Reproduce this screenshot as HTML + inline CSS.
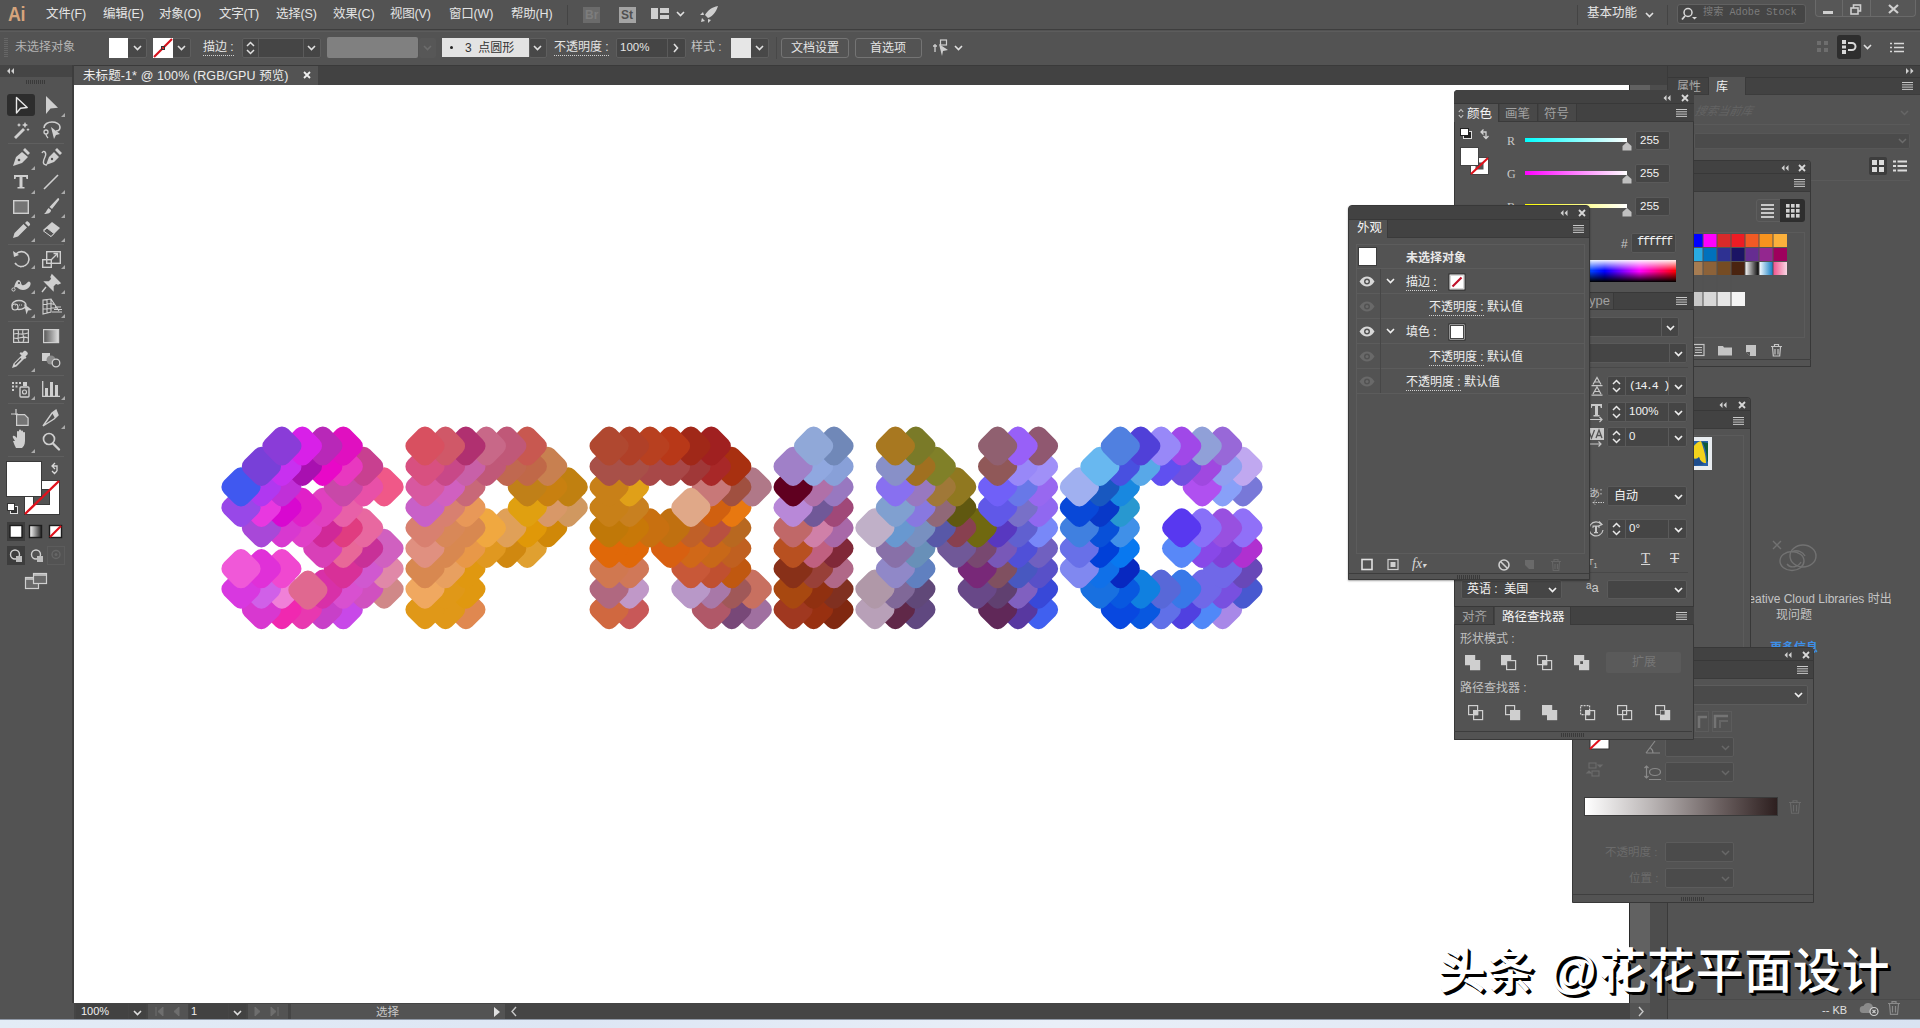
<!DOCTYPE html>
<html lang="zh-CN">
<head>
<meta charset="utf-8">
<title>未标题-1* @ 100% (RGB/GPU 预览)</title>
<style>
*{box-sizing:border-box;margin:0;padding:0}
html,body{width:1920px;height:1028px;overflow:hidden;background:#535353}
body{font-family:"Liberation Sans","Noto Sans CJK SC",sans-serif;font-size:12px;color:#e4e4e4;position:relative}
.abs{position:absolute}
.t{position:absolute;white-space:nowrap;line-height:1}
.dim{color:#8d8d8d}
.fld{position:absolute;background:#454545;border:1px solid #606060;border-radius:2px}
.dfld{position:absolute;background:#4b4b4b;border:1px solid #5c5c5c;border-radius:2px}
.chev{position:absolute;width:9px;height:6px}
.ul{border-bottom:1px dotted #d0d0d0;padding-bottom:1px}
svg{position:absolute;overflow:visible}
.panel{position:absolute;background:#535353;border:1px solid #383838;box-shadow:0 0 0 0 #000}
.phead{position:absolute;left:0;right:0;top:0;background:#424242}
.ptabs{position:absolute;left:0;right:0;background:#424242}
.ptab{position:absolute;top:0;bottom:0;background:#535353;border-right:1px solid #383838}
.ico{stroke:#d6d6d6;fill:none;stroke-width:1.4}
</style>
</head>
<body>

<!-- ===== menu bar ===== -->
<div class="abs" style="left:0;top:0;width:1920px;height:30px;background:#535353;border-bottom:1px solid #3e3e3e"></div>
<div class="t" style="left:8px;top:3px;font-size:21px;font-weight:bold;color:#d6a47c;letter-spacing:-0.5px;transform:scaleX(.85);transform-origin:left">Ai</div>
<div class="t" style="left:46px;top:8px;font-size:12.500px;letter-spacing:-0.200px">文件(F)</div>
<div class="t" style="left:103px;top:8px;font-size:12.500px;letter-spacing:-0.200px">编辑(E)</div>
<div class="t" style="left:159px;top:8px;font-size:12.500px;letter-spacing:-0.200px">对象(O)</div>
<div class="t" style="left:219px;top:8px;font-size:12.500px;letter-spacing:-0.200px">文字(T)</div>
<div class="t" style="left:276px;top:8px;font-size:12.500px;letter-spacing:-0.200px">选择(S)</div>
<div class="t" style="left:333px;top:8px;font-size:12.500px;letter-spacing:-0.200px">效果(C)</div>
<div class="t" style="left:390px;top:8px;font-size:12.500px;letter-spacing:-0.200px">视图(V)</div>
<div class="t" style="left:449px;top:8px;font-size:12.500px;letter-spacing:-0.200px">窗口(W)</div>
<div class="t" style="left:511px;top:8px;font-size:12.500px;letter-spacing:-0.200px">帮助(H)</div>
<div class="abs" style="left:567px;top:5px;width:1px;height:20px;background:#444"></div>
<div class="abs" style="left:583px;top:7px;width:17px;height:16px;background:#6b6b6b"></div>
<div class="t" style="left:585px;top:9px;font-size:12px;font-weight:bold;color:#7d7d7d">Br</div>
<div class="abs" style="left:619px;top:7px;width:17px;height:16px;background:#a4a4a4"></div>
<div class="t" style="left:621px;top:9px;font-size:12px;font-weight:bold;color:#505050">St</div>
<svg style="left:651px;top:8px" width="18" height="12"><rect x="0" y="0" width="7" height="11" fill="#cfcfcf"/><rect x="9" y="0" width="9" height="5" fill="#cfcfcf"/><rect x="9" y="7" width="9" height="4" fill="#cfcfcf"/></svg>
<svg style="left:676px;top:11px" width="9" height="6"><path d="M1 1l3.5 3.5L8 1" stroke="#e0e0e0" stroke-width="1.6" fill="none"/></svg>
<svg style="left:700px;top:6px" width="19" height="17" viewBox="0 0 19 17"><path d="M18 0C12 1 8 4 5 9l3 3c5-2 8-6 10-12zM4 9L0 9 3 6zM8 13l0 4 3-3zM2 12l3 3-4 1z" fill="#cfcfcf"/></svg>
<div class="abs" style="left:1577px;top:5px;width:1px;height:20px;background:#444"></div>
<div class="t" style="left:1587px;top:7px;font-size:12.5px">基本功能</div>
<svg style="left:1645px;top:12px" width="9" height="6"><path d="M1 1l3.5 3.5L8 1" stroke="#e0e0e0" stroke-width="1.6" fill="none"/></svg>
<div class="abs" style="left:1667px;top:5px;width:1px;height:20px;background:#444"></div>
<div class="abs" style="left:1677px;top:4px;width:129px;height:20px;background:#454545;border:1px solid #616161;border-radius:3px"></div>
<svg style="left:1681px;top:7px" width="16" height="14" viewBox="0 0 16 14"><circle cx="7" cy="5.5" r="4" stroke="#d8d8d8" stroke-width="1.5" fill="none"/><path d="M4 9L1 12.5" stroke="#d8d8d8" stroke-width="1.8"/><path d="M11 10h5l-2.5 2.5z" fill="#d8d8d8"/></svg>
<div class="t" style="left:1703px;top:8px;font-size:10.200px;color:#7c7c7c;font-family:'Liberation Mono','Noto Sans CJK SC',monospace">搜索 Adobe Stock</div>
<div class="abs" style="left:1815px;top:0;width:101px;height:17px;border:1px solid #6a6a6a;border-top:none;border-radius:0 0 4px 4px;background:#575757"></div>
<div class="abs" style="left:1842px;top:0;width:1px;height:16px;background:#6a6a6a"></div>
<div class="abs" style="left:1870px;top:0;width:1px;height:16px;background:#6a6a6a"></div>
<div class="abs" style="left:1823px;top:11px;width:10px;height:3px;background:#cfcfcf"></div>
<svg style="left:1850px;top:4px" width="12" height="11"><rect x="3.5" y="1" width="7" height="6" stroke="#cfcfcf" stroke-width="1.6" fill="none"/><rect x="1" y="4" width="7" height="6" stroke="#cfcfcf" stroke-width="1.6" fill="#575757"/></svg>
<svg style="left:1888px;top:4px" width="11" height="10"><path d="M1 1l9 8M10 1l-9 8" stroke="#cfcfcf" stroke-width="2.2"/></svg>

<!-- ===== control bar ===== -->
<div class="abs" style="left:0;top:31px;width:1920px;height:34px;background:#535353;border-top:1px solid #5c5c5c"></div>
<div class="abs" style="left:4px;top:38px;width:4px;height:20px;background:repeating-linear-gradient(#666 0 1px,transparent 1px 2px)"></div>
<div class="t" style="left:15px;top:41px;font-size:12px;color:#b4b4b4">未选择对象</div>
<div class="abs" style="left:109px;top:38px;width:38px;height:20px;background:#484848;border:1px solid #5e5e5e;border-radius:2px"></div>
<div class="abs" style="left:109px;top:38px;width:19px;height:20px;background:#fff"></div>
<svg style="left:133px;top:45px" width="9" height="6"><path d="M1 1l3.5 3.5L8 1" stroke="#e0e0e0" stroke-width="1.6" fill="none"/></svg>
<div class="abs" style="left:153px;top:38px;width:38px;height:20px;background:#484848;border:1px solid #5e5e5e;border-radius:2px"></div>
<svg style="left:153px;top:38px" width="20" height="20"><rect width="20" height="20" fill="#fff"/><path d="M1 19L19 1" stroke="#d6111b" stroke-width="2.2"/><rect x="8.5" y="8.5" width="3" height="3" fill="none" stroke="#333" stroke-width="1"/></svg>
<svg style="left:177px;top:45px" width="9" height="6"><path d="M1 1l3.5 3.5L8 1" stroke="#e0e0e0" stroke-width="1.6" fill="none"/></svg>
<div class="t" style="left:203px;top:41px;font-size:12px"><span class="ul">描边 :</span></div>
<div class="abs" style="left:242px;top:38px;width:79px;height:20px;background:#454545;border:1px solid #5e5e5e;border-radius:2px"></div>
<div class="abs" style="left:258px;top:39px;width:1px;height:18px;background:#5a5a5a"></div>
<div class="abs" style="left:303px;top:39px;width:1px;height:18px;background:#5a5a5a"></div>
<svg style="left:246px;top:41px" width="9" height="14"><path d="M1 5l3.5-3.5L8 5M1 9l3.5 3.5L8 9" stroke="#e0e0e0" stroke-width="1.5" fill="none"/></svg>
<svg style="left:307px;top:45px" width="9" height="6"><path d="M1 1l3.5 3.5L8 1" stroke="#e0e0e0" stroke-width="1.6" fill="none"/></svg>
<div class="abs" style="left:327px;top:37px;width:91px;height:21px;background:#808080;border-radius:2px"></div>
<div class="abs" style="left:419px;top:38px;width:17px;height:20px;background:#575757;border-radius:2px"></div>
<svg style="left:423px;top:45px" width="9" height="6"><path d="M1 1l3.5 3.5L8 1" stroke="#6c6c6c" stroke-width="1.6" fill="none"/></svg>
<div class="abs" style="left:442px;top:38px;width:87px;height:19px;background:#e3e3e3"></div>
<div class="abs" style="left:450px;top:46px;width:3px;height:3px;border-radius:50%;background:#222"></div>
<div class="t" style="left:465px;top:42px;font-size:12px;color:#333">3&nbsp; 点圆形</div>
<div class="abs" style="left:529px;top:38px;width:18px;height:20px;background:#484848;border:1px solid #5e5e5e;border-radius:2px"></div>
<svg style="left:533px;top:45px" width="9" height="6"><path d="M1 1l3.5 3.5L8 1" stroke="#e0e0e0" stroke-width="1.6" fill="none"/></svg>
<div class="t" style="left:554px;top:41px;font-size:12px"><span class="ul">不透明度 :</span></div>
<div class="abs" style="left:616px;top:38px;width:70px;height:20px;background:#454545;border:1px solid #5e5e5e;border-radius:2px"></div>
<div class="abs" style="left:667px;top:39px;width:1px;height:18px;background:#5a5a5a"></div>
<div class="t" style="left:620px;top:42px;font-size:11.5px">100%</div>
<svg style="left:673px;top:43px" width="6" height="10"><path d="M1 1l3.5 4L1 9" stroke="#e0e0e0" stroke-width="1.6" fill="none"/></svg>
<div class="t" style="left:691px;top:41px;font-size:12px;color:#c4c4c4">样式 :</div>
<div class="abs" style="left:731px;top:38px;width:38px;height:20px;background:#484848;border:1px solid #5e5e5e;border-radius:2px"></div>
<div class="abs" style="left:731px;top:38px;width:20px;height:20px;background:#e6e6e6"></div>
<svg style="left:755px;top:45px" width="9" height="6"><path d="M1 1l3.5 3.5L8 1" stroke="#e0e0e0" stroke-width="1.6" fill="none"/></svg>
<div class="abs" style="left:776px;top:37px;width:1px;height:22px;background:#484848"></div>
<div class="abs" style="left:781px;top:38px;width:68px;height:20px;border:1px solid #747474;border-radius:3px"></div>
<div class="t" style="left:791px;top:42px;font-size:12px">文档设置</div>
<div class="abs" style="left:855px;top:38px;width:67px;height:20px;border:1px solid #747474;border-radius:3px"></div>
<div class="t" style="left:870px;top:42px;font-size:12px">首选项</div>
<svg style="left:931px;top:38px" width="20" height="20" viewBox="0 0 20 20"><path d="M2 8h4M4 6v8" stroke="#cfcfcf" stroke-width="1.3"/><path d="M8 6l9 6-5 1-1 5z" fill="#cfcfcf"/><rect x="9.5" y="2" width="6" height="5" fill="none" stroke="#cfcfcf" stroke-width="1.2"/></svg>
<svg style="left:954px;top:45px" width="9" height="6"><path d="M1 1l3.5 3.5L8 1" stroke="#e0e0e0" stroke-width="1.6" fill="none"/></svg>
<!-- right control icons -->
<svg style="left:1817px;top:41px" width="12" height="12"><rect x="0" y="0" width="4" height="4" fill="#6e6e6e"/><rect x="7" y="0" width="4" height="4" fill="#6e6e6e"/><rect x="0" y="7" width="4" height="4" fill="#6e6e6e"/><rect x="7" y="7" width="4" height="4" fill="#6e6e6e"/></svg>
<div class="abs" style="left:1837px;top:35px;width:24px;height:24px;background:#2e2e2e;border-radius:3px"></div>
<svg style="left:1842px;top:40px" width="15" height="14"><rect x="0" y="0" width="4" height="4" fill="#d8d8d8"/><rect x="0" y="5.5" width="4" height="3" fill="#d8d8d8"/><rect x="0" y="10" width="4" height="4" fill="#d8d8d8"/><path d="M6 3h4a3.5 3.5 0 010 7H6" stroke="#d8d8d8" stroke-width="2" fill="none"/></svg>
<svg style="left:1863px;top:44px" width="9" height="6"><path d="M1 1l3.5 3.5L8 1" stroke="#e0e0e0" stroke-width="1.6" fill="none"/></svg>
<svg style="left:1890px;top:42px" width="14" height="11"><path d="M0 1.5h2M4 1.5h10M0 5.5h2M4 5.5h10M0 9.5h2M4 9.5h10" stroke="#d8d8d8" stroke-width="1.6"/></svg>

<!-- ===== tab row ===== -->
<div class="abs" style="left:0;top:65px;width:1920px;height:20px;background:#424242;border-top:1px solid #3a3a3a"></div>
<div class="abs" style="left:0;top:65px;width:73px;height:12px;background:#454545"></div>
<svg style="left:6px;top:68px" width="9" height="6"><path d="M4 0L1 3l3 3M8 0L5 3l3 3" fill="#cfcfcf" stroke="none"/></svg>
<div class="abs" style="left:74px;top:66px;width:244px;height:19px;background:#535353"></div>
<div class="t" style="left:83px;top:70px;font-size:12.500px;letter-spacing:0.100px;color:#ececec">未标题-1* @ 100% (RGB/GPU 预览)</div>
<svg style="left:303px;top:71px" width="8" height="8"><path d="M1 1l6 6M7 1l-6 6" stroke="#f0f0f0" stroke-width="1.8"/></svg>

<!-- ===== toolbar bg ===== -->
<div class="abs" style="left:0;top:77px;width:72px;height:926px;background:#535353"></div>
<div class="abs" style="left:72px;top:65px;width:2px;height:938px;background:#3d3d3d"></div>
<div class="abs" style="left:26px;top:80px;width:20px;height:4px;background:repeating-linear-gradient(90deg,#3a3a3a 0 1px,transparent 1px 2px)"></div>

<!-- ===== canvas ===== -->
<div class="abs" style="left:74px;top:85px;width:1555px;height:918px;background:#fff"></div>
<div class="abs" style="left:1629px;top:85px;width:21px;height:918px;background:#616161;border-left:1px solid #2a2a2a"></div>
<div class="abs" style="left:1650px;top:85px;width:17px;height:934px;background:#4d4d4d"></div>
<div class="abs" style="left:1667px;top:65px;width:1px;height:954px;background:#3a3a3a"></div>

<!-- ===== status bar ===== -->
<div class="abs" style="left:0;top:1003px;width:1650px;height:16px;background:#454545"></div>
<div class="abs" style="left:0;top:1003px;width:74px;height:16px;background:#535353"></div>
<div class="abs" style="left:76px;top:1004px;width:52px;height:15px;background:#424242"></div>
<div class="t" style="left:81px;top:1006px;font-size:11px;color:#f0f0f0">100%</div>
<div class="abs" style="left:129px;top:1004px;width:17px;height:15px;background:#424242"></div>
<svg style="left:133px;top:1010px" width="9" height="6"><path d="M1 1l3.5 3.5L8 1" stroke="#e0e0e0" stroke-width="1.6" fill="none"/></svg>
<div class="abs" style="left:148px;top:1004px;width:40px;height:15px;background:#535353"></div>
<svg style="left:155px;top:1007px" width="28" height="9"><path d="M1 0v9M8 0L3 4.5 8 9zM24 0l-5 4.5 5 4.5z" fill="#6e6e6e" stroke="#6e6e6e" stroke-width="1"/></svg>
<div class="abs" style="left:189px;top:1004px;width:39px;height:15px;background:#424242"></div>
<div class="t" style="left:191px;top:1006px;font-size:11px;color:#f0f0f0">1</div>
<div class="abs" style="left:229px;top:1004px;width:17px;height:15px;background:#424242"></div>
<svg style="left:233px;top:1010px" width="9" height="6"><path d="M1 1l3.5 3.5L8 1" stroke="#e0e0e0" stroke-width="1.6" fill="none"/></svg>
<div class="abs" style="left:248px;top:1004px;width:40px;height:15px;background:#535353"></div>
<svg style="left:254px;top:1007px" width="28" height="9"><path d="M1 0l5 4.5L1 9zM17 0l5 4.5L17 9zM24 0v9" fill="#6e6e6e" stroke="#6e6e6e" stroke-width="1"/></svg>
<div class="abs" style="left:291px;top:1004px;width:214px;height:15px;background:#535353"></div>
<div class="t" style="left:376px;top:1007px;font-size:11.5px;color:#c8c8c8">选择</div>
<svg style="left:494px;top:1007px" width="7" height="10"><path d="M0 0l6 5-6 5z" fill="#e0e0e0"/></svg>
<svg style="left:511px;top:1007px" width="6" height="9"><path d="M5 0L1 4.5 5 9" stroke="#c8c8c8" stroke-width="1.4" fill="none"/></svg>
<svg style="left:1638px;top:1007px" width="6" height="9"><path d="M1 0l4 4.5L1 9" stroke="#c8c8c8" stroke-width="1.4" fill="none"/></svg>
<div class="abs" style="left:1630px;top:1003px;width:20px;height:16px;background:#535353;z-index:-0"></div>
<svg style="left:1638px;top:1007px" width="6" height="9"><path d="M1 0l4 4.5L1 9" stroke="#c8c8c8" stroke-width="1.4" fill="none"/></svg>
<!-- bottom OS strip -->
<div class="abs" style="left:0;top:1019px;width:1920px;height:9px;background:linear-gradient(90deg,#e3ecf6 0%,#dde6f4 30%,#e9eff8 55%,#d9e3f2 100%);border-top:1px solid #8f98a6"></div>

<!-- ===== artwork ===== -->
<svg class="art" style="position:absolute;left:74px;top:85px" width="1556" height="918" viewBox="74 85 1556 918">
<rect x="1206.1" y="593.1" width="33" height="33" rx="9" fill="#a888e8" transform="rotate(45 1222.6 609.6)"/>
<rect x="1185.7" y="593.1" width="33" height="33" rx="9" fill="#5088f8" transform="rotate(45 1202.2 609.6)"/>
<rect x="1165.2" y="593.1" width="33" height="33" rx="9" fill="#5040e0" transform="rotate(45 1181.7 609.6)"/>
<rect x="1144.8" y="593.1" width="33" height="33" rx="9" fill="#6070e8" transform="rotate(45 1161.2 609.6)"/>
<rect x="1124.3" y="593.1" width="33" height="33" rx="9" fill="#0858e0" transform="rotate(45 1140.8 609.6)"/>
<rect x="1103.8" y="593.1" width="33" height="33" rx="9" fill="#0848e0" transform="rotate(45 1120.3 609.6)"/>
<rect x="1022.0" y="593.1" width="33" height="33" rx="9" fill="#4060f0" transform="rotate(45 1038.5 609.6)"/>
<rect x="1001.6" y="593.1" width="33" height="33" rx="9" fill="#5838a0" transform="rotate(45 1018.1 609.6)"/>
<rect x="981.1" y="593.1" width="33" height="33" rx="9" fill="#602858" transform="rotate(45 997.6 609.6)"/>
<rect x="899.4" y="593.1" width="33" height="33" rx="9" fill="#604880" transform="rotate(45 915.9 609.6)"/>
<rect x="878.9" y="593.1" width="33" height="33" rx="9" fill="#602848" transform="rotate(45 895.4 609.6)"/>
<rect x="858.4" y="593.1" width="33" height="33" rx="9" fill="#b8a0b8" transform="rotate(45 874.9 609.6)"/>
<rect x="817.5" y="593.1" width="33" height="33" rx="9" fill="#802810" transform="rotate(45 834.0 609.6)"/>
<rect x="797.1" y="593.1" width="33" height="33" rx="9" fill="#983010" transform="rotate(45 813.6 609.6)"/>
<rect x="776.6" y="593.1" width="33" height="33" rx="9" fill="#a03820" transform="rotate(45 793.1 609.6)"/>
<rect x="735.8" y="593.1" width="33" height="33" rx="9" fill="#a070a0" transform="rotate(45 752.2 609.6)"/>
<rect x="715.3" y="593.1" width="33" height="33" rx="9" fill="#784878" transform="rotate(45 731.8 609.6)"/>
<rect x="694.8" y="593.1" width="33" height="33" rx="9" fill="#b05868" transform="rotate(45 711.3 609.6)"/>
<rect x="613.0" y="593.1" width="33" height="33" rx="9" fill="#c85858" transform="rotate(45 629.5 609.6)"/>
<rect x="592.6" y="593.1" width="33" height="33" rx="9" fill="#d06840" transform="rotate(45 609.1 609.6)"/>
<rect x="449.4" y="593.1" width="33" height="33" rx="9" fill="#e08850" transform="rotate(45 465.9 609.6)"/>
<rect x="429.0" y="593.1" width="33" height="33" rx="9" fill="#e09818" transform="rotate(45 445.5 609.6)"/>
<rect x="408.5" y="593.1" width="33" height="33" rx="9" fill="#e09818" transform="rotate(45 425.0 609.6)"/>
<rect x="326.8" y="593.1" width="33" height="33" rx="9" fill="#c848e8" transform="rotate(45 343.2 609.6)"/>
<rect x="306.3" y="593.1" width="33" height="33" rx="9" fill="#c840c8" transform="rotate(45 322.8 609.6)"/>
<rect x="285.9" y="593.1" width="33" height="33" rx="9" fill="#e838b0" transform="rotate(45 302.4 609.6)"/>
<rect x="265.4" y="593.1" width="33" height="33" rx="9" fill="#f028b0" transform="rotate(45 281.9 609.6)"/>
<rect x="244.9" y="593.1" width="33" height="33" rx="9" fill="#d838d0" transform="rotate(45 261.4 609.6)"/>
<rect x="1226.5" y="572.6" width="33" height="33" rx="9" fill="#4858d0" transform="rotate(45 1243.0 589.1)"/>
<rect x="1206.1" y="572.6" width="33" height="33" rx="9" fill="#7850e0" transform="rotate(45 1222.6 589.1)"/>
<rect x="1185.7" y="572.6" width="33" height="33" rx="9" fill="#7068e8" transform="rotate(45 1202.2 589.1)"/>
<rect x="1165.2" y="572.6" width="33" height="33" rx="9" fill="#3878e8" transform="rotate(45 1181.7 589.1)"/>
<rect x="1144.8" y="572.6" width="33" height="33" rx="9" fill="#5868d8" transform="rotate(45 1161.2 589.1)"/>
<rect x="1124.3" y="572.6" width="33" height="33" rx="9" fill="#1080e0" transform="rotate(45 1140.8 589.1)"/>
<rect x="1103.8" y="572.6" width="33" height="33" rx="9" fill="#0858e0" transform="rotate(45 1120.3 589.1)"/>
<rect x="1083.4" y="572.6" width="33" height="33" rx="9" fill="#1870e0" transform="rotate(45 1099.9 589.1)"/>
<rect x="1022.0" y="572.6" width="33" height="33" rx="9" fill="#3848d8" transform="rotate(45 1038.5 589.1)"/>
<rect x="1001.6" y="572.6" width="33" height="33" rx="9" fill="#8060c0" transform="rotate(45 1018.1 589.1)"/>
<rect x="981.1" y="572.6" width="33" height="33" rx="9" fill="#604070" transform="rotate(45 997.6 589.1)"/>
<rect x="960.7" y="572.6" width="33" height="33" rx="9" fill="#684888" transform="rotate(45 977.2 589.1)"/>
<rect x="899.4" y="572.6" width="33" height="33" rx="9" fill="#604878" transform="rotate(45 915.9 589.1)"/>
<rect x="878.9" y="572.6" width="33" height="33" rx="9" fill="#806898" transform="rotate(45 895.4 589.1)"/>
<rect x="858.4" y="572.6" width="33" height="33" rx="9" fill="#b098a8" transform="rotate(45 874.9 589.1)"/>
<rect x="817.5" y="572.6" width="33" height="33" rx="9" fill="#803020" transform="rotate(45 834.0 589.1)"/>
<rect x="797.1" y="572.6" width="33" height="33" rx="9" fill="#903010" transform="rotate(45 813.6 589.1)"/>
<rect x="776.6" y="572.6" width="33" height="33" rx="9" fill="#a84810" transform="rotate(45 793.1 589.1)"/>
<rect x="735.8" y="572.6" width="33" height="33" rx="9" fill="#c87060" transform="rotate(45 752.2 589.1)"/>
<rect x="715.3" y="572.6" width="33" height="33" rx="9" fill="#a05858" transform="rotate(45 731.8 589.1)"/>
<rect x="694.8" y="572.6" width="33" height="33" rx="9" fill="#a878a8" transform="rotate(45 711.3 589.1)"/>
<rect x="674.4" y="572.6" width="33" height="33" rx="9" fill="#b898c8" transform="rotate(45 690.9 589.1)"/>
<rect x="613.0" y="572.6" width="33" height="33" rx="9" fill="#c098c8" transform="rotate(45 629.5 589.1)"/>
<rect x="592.6" y="572.6" width="33" height="33" rx="9" fill="#b06880" transform="rotate(45 609.1 589.1)"/>
<rect x="449.4" y="572.6" width="33" height="33" rx="9" fill="#e09810" transform="rotate(45 465.9 589.1)"/>
<rect x="429.0" y="572.6" width="33" height="33" rx="9" fill="#e09818" transform="rotate(45 445.5 589.1)"/>
<rect x="408.5" y="572.6" width="33" height="33" rx="9" fill="#f0a860" transform="rotate(45 425.0 589.1)"/>
<rect x="367.6" y="572.6" width="33" height="33" rx="9" fill="#d08888" transform="rotate(45 384.1 589.1)"/>
<rect x="347.2" y="572.6" width="33" height="33" rx="9" fill="#d050c0" transform="rotate(45 363.7 589.1)"/>
<rect x="326.8" y="572.6" width="33" height="33" rx="9" fill="#d850d0" transform="rotate(45 343.2 589.1)"/>
<rect x="306.3" y="572.6" width="33" height="33" rx="9" fill="#d830a8" transform="rotate(45 322.8 589.1)"/>
<rect x="265.4" y="572.6" width="33" height="33" rx="9" fill="#f080d8" transform="rotate(45 281.9 589.1)"/>
<rect x="244.9" y="572.6" width="33" height="33" rx="9" fill="#d060e8" transform="rotate(45 261.4 589.1)"/>
<rect x="224.5" y="572.6" width="33" height="33" rx="9" fill="#d838e0" transform="rotate(45 241.0 589.1)"/>
<rect x="1226.5" y="552.2" width="33" height="33" rx="9" fill="#6848b8" transform="rotate(45 1243.0 568.7)"/>
<rect x="1206.1" y="552.2" width="33" height="33" rx="9" fill="#7068e8" transform="rotate(45 1222.6 568.7)"/>
<rect x="1103.8" y="552.2" width="33" height="33" rx="9" fill="#0828c0" transform="rotate(45 1120.3 568.7)"/>
<rect x="1083.4" y="552.2" width="33" height="33" rx="9" fill="#1070e8" transform="rotate(45 1099.9 568.7)"/>
<rect x="1062.9" y="552.2" width="33" height="33" rx="9" fill="#8088f0" transform="rotate(45 1079.4 568.7)"/>
<rect x="1022.0" y="552.2" width="33" height="33" rx="9" fill="#5850c8" transform="rotate(45 1038.5 568.7)"/>
<rect x="1001.6" y="552.2" width="33" height="33" rx="9" fill="#4858c0" transform="rotate(45 1018.1 568.7)"/>
<rect x="981.1" y="552.2" width="33" height="33" rx="9" fill="#805060" transform="rotate(45 997.6 568.7)"/>
<rect x="960.7" y="552.2" width="33" height="33" rx="9" fill="#782878" transform="rotate(45 977.2 568.7)"/>
<rect x="899.4" y="552.2" width="33" height="33" rx="9" fill="#6080c0" transform="rotate(45 915.9 568.7)"/>
<rect x="878.9" y="552.2" width="33" height="33" rx="9" fill="#9088c8" transform="rotate(45 895.4 568.7)"/>
<rect x="817.5" y="552.2" width="33" height="33" rx="9" fill="#b06888" transform="rotate(45 834.0 568.7)"/>
<rect x="797.1" y="552.2" width="33" height="33" rx="9" fill="#984038" transform="rotate(45 813.6 568.7)"/>
<rect x="776.6" y="552.2" width="33" height="33" rx="9" fill="#883018" transform="rotate(45 793.1 568.7)"/>
<rect x="715.3" y="552.2" width="33" height="33" rx="9" fill="#c05810" transform="rotate(45 731.8 568.7)"/>
<rect x="694.8" y="552.2" width="33" height="33" rx="9" fill="#c05030" transform="rotate(45 711.3 568.7)"/>
<rect x="674.4" y="552.2" width="33" height="33" rx="9" fill="#c85838" transform="rotate(45 690.9 568.7)"/>
<rect x="613.0" y="552.2" width="33" height="33" rx="9" fill="#d07858" transform="rotate(45 629.5 568.7)"/>
<rect x="592.6" y="552.2" width="33" height="33" rx="9" fill="#d07850" transform="rotate(45 609.1 568.7)"/>
<rect x="449.4" y="552.2" width="33" height="33" rx="9" fill="#e09810" transform="rotate(45 465.9 568.7)"/>
<rect x="429.0" y="552.2" width="33" height="33" rx="9" fill="#e8a060" transform="rotate(45 445.5 568.7)"/>
<rect x="408.5" y="552.2" width="33" height="33" rx="9" fill="#d88850" transform="rotate(45 425.0 568.7)"/>
<rect x="367.6" y="552.2" width="33" height="33" rx="9" fill="#e088a8" transform="rotate(45 384.1 568.7)"/>
<rect x="347.2" y="552.2" width="33" height="33" rx="9" fill="#d058d0" transform="rotate(45 363.7 568.7)"/>
<rect x="326.8" y="552.2" width="33" height="33" rx="9" fill="#d83098" transform="rotate(45 343.2 568.7)"/>
<rect x="265.4" y="552.2" width="33" height="33" rx="9" fill="#f048d0" transform="rotate(45 281.9 568.7)"/>
<rect x="244.9" y="552.2" width="33" height="33" rx="9" fill="#e030d8" transform="rotate(45 261.4 568.7)"/>
<rect x="224.5" y="552.2" width="33" height="33" rx="9" fill="#f058d8" transform="rotate(45 241.0 568.7)"/>
<rect x="1226.5" y="531.8" width="33" height="33" rx="9" fill="#b030d0" transform="rotate(45 1243.0 548.2)"/>
<rect x="1206.1" y="531.8" width="33" height="33" rx="9" fill="#8040d8" transform="rotate(45 1222.6 548.2)"/>
<rect x="1185.7" y="531.8" width="33" height="33" rx="9" fill="#8848e8" transform="rotate(45 1202.2 548.2)"/>
<rect x="1165.2" y="531.8" width="33" height="33" rx="9" fill="#5888f8" transform="rotate(45 1181.7 548.2)"/>
<rect x="1103.8" y="531.8" width="33" height="33" rx="9" fill="#0878f0" transform="rotate(45 1120.3 548.2)"/>
<rect x="1083.4" y="531.8" width="33" height="33" rx="9" fill="#0040d8" transform="rotate(45 1099.9 548.2)"/>
<rect x="1062.9" y="531.8" width="33" height="33" rx="9" fill="#6870e8" transform="rotate(45 1079.4 548.2)"/>
<rect x="1022.0" y="531.8" width="33" height="33" rx="9" fill="#7060c0" transform="rotate(45 1038.5 548.2)"/>
<rect x="1001.6" y="531.8" width="33" height="33" rx="9" fill="#5050d8" transform="rotate(45 1018.1 548.2)"/>
<rect x="981.1" y="531.8" width="33" height="33" rx="9" fill="#7858b8" transform="rotate(45 997.6 548.2)"/>
<rect x="960.7" y="531.8" width="33" height="33" rx="9" fill="#784870" transform="rotate(45 977.2 548.2)"/>
<rect x="940.2" y="531.8" width="33" height="33" rx="9" fill="#705898" transform="rotate(45 956.8 548.2)"/>
<rect x="899.4" y="531.8" width="33" height="33" rx="9" fill="#6890b8" transform="rotate(45 915.9 548.2)"/>
<rect x="878.9" y="531.8" width="33" height="33" rx="9" fill="#8870a8" transform="rotate(45 895.4 548.2)"/>
<rect x="817.5" y="531.8" width="33" height="33" rx="9" fill="#802838" transform="rotate(45 834.0 548.2)"/>
<rect x="797.1" y="531.8" width="33" height="33" rx="9" fill="#c06080" transform="rotate(45 813.6 548.2)"/>
<rect x="776.6" y="531.8" width="33" height="33" rx="9" fill="#b85020" transform="rotate(45 793.1 548.2)"/>
<rect x="715.3" y="531.8" width="33" height="33" rx="9" fill="#c06020" transform="rotate(45 731.8 548.2)"/>
<rect x="694.8" y="531.8" width="33" height="33" rx="9" fill="#c86818" transform="rotate(45 711.3 548.2)"/>
<rect x="674.4" y="531.8" width="33" height="33" rx="9" fill="#d06818" transform="rotate(45 690.9 548.2)"/>
<rect x="654.0" y="531.8" width="33" height="33" rx="9" fill="#d86010" transform="rotate(45 670.5 548.2)"/>
<rect x="613.0" y="531.8" width="33" height="33" rx="9" fill="#e06808" transform="rotate(45 629.5 548.2)"/>
<rect x="592.6" y="531.8" width="33" height="33" rx="9" fill="#e06808" transform="rotate(45 609.1 548.2)"/>
<rect x="510.8" y="531.8" width="33" height="33" rx="9" fill="#e0a030" transform="rotate(45 527.3 548.2)"/>
<rect x="490.3" y="531.8" width="33" height="33" rx="9" fill="#d08810" transform="rotate(45 506.8 548.2)"/>
<rect x="469.9" y="531.8" width="33" height="33" rx="9" fill="#e09820" transform="rotate(45 486.4 548.2)"/>
<rect x="449.4" y="531.8" width="33" height="33" rx="9" fill="#e89848" transform="rotate(45 465.9 548.2)"/>
<rect x="429.0" y="531.8" width="33" height="33" rx="9" fill="#d88850" transform="rotate(45 445.5 548.2)"/>
<rect x="408.5" y="531.8" width="33" height="33" rx="9" fill="#e09080" transform="rotate(45 425.0 548.2)"/>
<rect x="367.6" y="531.8" width="33" height="33" rx="9" fill="#d060c0" transform="rotate(45 384.1 548.2)"/>
<rect x="347.2" y="531.8" width="33" height="33" rx="9" fill="#c83098" transform="rotate(45 363.7 548.2)"/>
<rect x="326.8" y="531.8" width="33" height="33" rx="9" fill="#e86898" transform="rotate(45 343.2 548.2)"/>
<rect x="306.3" y="531.8" width="33" height="33" rx="9" fill="#d840b8" transform="rotate(45 322.8 548.2)"/>
<rect x="1226.5" y="511.3" width="33" height="33" rx="9" fill="#9070f8" transform="rotate(45 1243.0 527.8)"/>
<rect x="1206.1" y="511.3" width="33" height="33" rx="9" fill="#9850e0" transform="rotate(45 1222.6 527.8)"/>
<rect x="1185.7" y="511.3" width="33" height="33" rx="9" fill="#8870f8" transform="rotate(45 1202.2 527.8)"/>
<rect x="1165.2" y="511.3" width="33" height="33" rx="9" fill="#5838f0" transform="rotate(45 1181.7 527.8)"/>
<rect x="1103.8" y="511.3" width="33" height="33" rx="9" fill="#4090e8" transform="rotate(45 1120.3 527.8)"/>
<rect x="1083.4" y="511.3" width="33" height="33" rx="9" fill="#0850d8" transform="rotate(45 1099.9 527.8)"/>
<rect x="1062.9" y="511.3" width="33" height="33" rx="9" fill="#4080e0" transform="rotate(45 1079.4 527.8)"/>
<rect x="1022.0" y="511.3" width="33" height="33" rx="9" fill="#7888f8" transform="rotate(45 1038.5 527.8)"/>
<rect x="1001.6" y="511.3" width="33" height="33" rx="9" fill="#6060d0" transform="rotate(45 1018.1 527.8)"/>
<rect x="981.1" y="511.3" width="33" height="33" rx="9" fill="#5838c0" transform="rotate(45 997.6 527.8)"/>
<rect x="960.7" y="511.3" width="33" height="33" rx="9" fill="#706810" transform="rotate(45 977.2 527.8)"/>
<rect x="940.2" y="511.3" width="33" height="33" rx="9" fill="#884050" transform="rotate(45 956.8 527.8)"/>
<rect x="919.8" y="511.3" width="33" height="33" rx="9" fill="#5858a8" transform="rotate(45 936.3 527.8)"/>
<rect x="899.4" y="511.3" width="33" height="33" rx="9" fill="#7890c0" transform="rotate(45 915.9 527.8)"/>
<rect x="878.9" y="511.3" width="33" height="33" rx="9" fill="#6898d0" transform="rotate(45 895.4 527.8)"/>
<rect x="858.4" y="511.3" width="33" height="33" rx="9" fill="#c0b0c8" transform="rotate(45 874.9 527.8)"/>
<rect x="817.5" y="511.3" width="33" height="33" rx="9" fill="#a868a8" transform="rotate(45 834.0 527.8)"/>
<rect x="797.1" y="511.3" width="33" height="33" rx="9" fill="#d080a8" transform="rotate(45 813.6 527.8)"/>
<rect x="776.6" y="511.3" width="33" height="33" rx="9" fill="#c06868" transform="rotate(45 793.1 527.8)"/>
<rect x="715.3" y="511.3" width="33" height="33" rx="9" fill="#b86820" transform="rotate(45 731.8 527.8)"/>
<rect x="694.8" y="511.3" width="33" height="33" rx="9" fill="#b85040" transform="rotate(45 711.3 527.8)"/>
<rect x="674.4" y="511.3" width="33" height="33" rx="9" fill="#c06028" transform="rotate(45 690.9 527.8)"/>
<rect x="654.0" y="511.3" width="33" height="33" rx="9" fill="#c07010" transform="rotate(45 670.5 527.8)"/>
<rect x="633.5" y="511.3" width="33" height="33" rx="9" fill="#c87010" transform="rotate(45 650.0 527.8)"/>
<rect x="613.0" y="511.3" width="33" height="33" rx="9" fill="#c87808" transform="rotate(45 629.5 527.8)"/>
<rect x="592.6" y="511.3" width="33" height="33" rx="9" fill="#c07808" transform="rotate(45 609.1 527.8)"/>
<rect x="531.2" y="511.3" width="33" height="33" rx="9" fill="#d08808" transform="rotate(45 547.8 527.8)"/>
<rect x="510.8" y="511.3" width="33" height="33" rx="9" fill="#e09808" transform="rotate(45 527.3 527.8)"/>
<rect x="490.3" y="511.3" width="33" height="33" rx="9" fill="#e0a058" transform="rotate(45 506.8 527.8)"/>
<rect x="469.9" y="511.3" width="33" height="33" rx="9" fill="#f0a840" transform="rotate(45 486.4 527.8)"/>
<rect x="449.4" y="511.3" width="33" height="33" rx="9" fill="#d88850" transform="rotate(45 465.9 527.8)"/>
<rect x="429.0" y="511.3" width="33" height="33" rx="9" fill="#d88858" transform="rotate(45 445.5 527.8)"/>
<rect x="408.5" y="511.3" width="33" height="33" rx="9" fill="#d88070" transform="rotate(45 425.0 527.8)"/>
<rect x="347.2" y="511.3" width="33" height="33" rx="9" fill="#e868a0" transform="rotate(45 363.7 527.8)"/>
<rect x="326.8" y="511.3" width="33" height="33" rx="9" fill="#e03c80" transform="rotate(45 343.2 527.8)"/>
<rect x="306.3" y="511.3" width="33" height="33" rx="9" fill="#d02898" transform="rotate(45 322.8 527.8)"/>
<rect x="285.9" y="511.3" width="33" height="33" rx="9" fill="#e040c8" transform="rotate(45 302.4 527.8)"/>
<rect x="265.4" y="511.3" width="33" height="33" rx="9" fill="#d838d0" transform="rotate(45 281.9 527.8)"/>
<rect x="244.9" y="511.3" width="33" height="33" rx="9" fill="#a848d8" transform="rotate(45 261.4 527.8)"/>
<rect x="1103.8" y="490.9" width="33" height="33" rx="9" fill="#2898d0" transform="rotate(45 1120.3 507.4)"/>
<rect x="1083.4" y="490.9" width="33" height="33" rx="9" fill="#0838c8" transform="rotate(45 1099.9 507.4)"/>
<rect x="1062.9" y="490.9" width="33" height="33" rx="9" fill="#0848d8" transform="rotate(45 1079.4 507.4)"/>
<rect x="1022.0" y="490.9" width="33" height="33" rx="9" fill="#9068f0" transform="rotate(45 1038.5 507.4)"/>
<rect x="1001.6" y="490.9" width="33" height="33" rx="9" fill="#7870c8" transform="rotate(45 1018.1 507.4)"/>
<rect x="981.1" y="490.9" width="33" height="33" rx="9" fill="#6058e8" transform="rotate(45 997.6 507.4)"/>
<rect x="940.2" y="490.9" width="33" height="33" rx="9" fill="#605810" transform="rotate(45 956.8 507.4)"/>
<rect x="919.8" y="490.9" width="33" height="33" rx="9" fill="#906878" transform="rotate(45 936.3 507.4)"/>
<rect x="899.4" y="490.9" width="33" height="33" rx="9" fill="#8878e0" transform="rotate(45 915.9 507.4)"/>
<rect x="878.9" y="490.9" width="33" height="33" rx="9" fill="#80a0d0" transform="rotate(45 895.4 507.4)"/>
<rect x="817.5" y="490.9" width="33" height="33" rx="9" fill="#a04878" transform="rotate(45 834.0 507.4)"/>
<rect x="797.1" y="490.9" width="33" height="33" rx="9" fill="#705898" transform="rotate(45 813.6 507.4)"/>
<rect x="776.6" y="490.9" width="33" height="33" rx="9" fill="#b888d8" transform="rotate(45 793.1 507.4)"/>
<rect x="715.3" y="490.9" width="33" height="33" rx="9" fill="#e87810" transform="rotate(45 731.8 507.4)"/>
<rect x="694.8" y="490.9" width="33" height="33" rx="9" fill="#d06010" transform="rotate(45 711.3 507.4)"/>
<rect x="613.0" y="490.9" width="33" height="33" rx="9" fill="#c88020" transform="rotate(45 629.5 507.4)"/>
<rect x="592.6" y="490.9" width="33" height="33" rx="9" fill="#c88018" transform="rotate(45 609.1 507.4)"/>
<rect x="551.7" y="490.9" width="33" height="33" rx="9" fill="#d09860" transform="rotate(45 568.2 507.4)"/>
<rect x="531.2" y="490.9" width="33" height="33" rx="9" fill="#d89868" transform="rotate(45 547.8 507.4)"/>
<rect x="510.8" y="490.9" width="33" height="33" rx="9" fill="#e0a010" transform="rotate(45 527.3 507.4)"/>
<rect x="449.4" y="490.9" width="33" height="33" rx="9" fill="#e89858" transform="rotate(45 465.9 507.4)"/>
<rect x="429.0" y="490.9" width="33" height="33" rx="9" fill="#d88070" transform="rotate(45 445.5 507.4)"/>
<rect x="408.5" y="490.9" width="33" height="33" rx="9" fill="#c860c8" transform="rotate(45 425.0 507.4)"/>
<rect x="326.8" y="490.9" width="33" height="33" rx="9" fill="#e860a8" transform="rotate(45 343.2 507.4)"/>
<rect x="306.3" y="490.9" width="33" height="33" rx="9" fill="#e040c0" transform="rotate(45 322.8 507.4)"/>
<rect x="285.9" y="490.9" width="33" height="33" rx="9" fill="#e020c8" transform="rotate(45 302.4 507.4)"/>
<rect x="265.4" y="490.9" width="33" height="33" rx="9" fill="#d808d0" transform="rotate(45 281.9 507.4)"/>
<rect x="244.9" y="490.9" width="33" height="33" rx="9" fill="#e838e0" transform="rotate(45 261.4 507.4)"/>
<rect x="224.5" y="490.9" width="33" height="33" rx="9" fill="#9848e8" transform="rotate(45 241.0 507.4)"/>
<rect x="1226.5" y="470.4" width="33" height="33" rx="9" fill="#7878d8" transform="rotate(45 1243.0 486.9)"/>
<rect x="1206.1" y="470.4" width="33" height="33" rx="9" fill="#88a0f8" transform="rotate(45 1222.6 486.9)"/>
<rect x="1185.7" y="470.4" width="33" height="33" rx="9" fill="#b050f0" transform="rotate(45 1202.2 486.9)"/>
<rect x="1103.8" y="470.4" width="33" height="33" rx="9" fill="#1888e0" transform="rotate(45 1120.3 486.9)"/>
<rect x="1083.4" y="470.4" width="33" height="33" rx="9" fill="#1858c0" transform="rotate(45 1099.9 486.9)"/>
<rect x="1062.9" y="470.4" width="33" height="33" rx="9" fill="#a0b0f0" transform="rotate(45 1079.4 486.9)"/>
<rect x="1022.0" y="470.4" width="33" height="33" rx="9" fill="#9868f0" transform="rotate(45 1038.5 486.9)"/>
<rect x="1001.6" y="470.4" width="33" height="33" rx="9" fill="#6878e8" transform="rotate(45 1018.1 486.9)"/>
<rect x="981.1" y="470.4" width="33" height="33" rx="9" fill="#7060f8" transform="rotate(45 997.6 486.9)"/>
<rect x="940.2" y="470.4" width="33" height="33" rx="9" fill="#907820" transform="rotate(45 956.8 486.9)"/>
<rect x="919.8" y="470.4" width="33" height="33" rx="9" fill="#a07838" transform="rotate(45 936.3 486.9)"/>
<rect x="899.4" y="470.4" width="33" height="33" rx="9" fill="#9878c0" transform="rotate(45 915.9 486.9)"/>
<rect x="878.9" y="470.4" width="33" height="33" rx="9" fill="#8870f0" transform="rotate(45 895.4 486.9)"/>
<rect x="817.5" y="470.4" width="33" height="33" rx="9" fill="#9878c0" transform="rotate(45 834.0 486.9)"/>
<rect x="797.1" y="470.4" width="33" height="33" rx="9" fill="#b070a8" transform="rotate(45 813.6 486.9)"/>
<rect x="776.6" y="470.4" width="33" height="33" rx="9" fill="#600020" transform="rotate(45 793.1 486.9)"/>
<rect x="735.8" y="470.4" width="33" height="33" rx="9" fill="#b07888" transform="rotate(45 752.2 486.9)"/>
<rect x="715.3" y="470.4" width="33" height="33" rx="9" fill="#a05040" transform="rotate(45 731.8 486.9)"/>
<rect x="694.8" y="470.4" width="33" height="33" rx="9" fill="#c87878" transform="rotate(45 711.3 486.9)"/>
<rect x="613.0" y="470.4" width="33" height="33" rx="9" fill="#e0a018" transform="rotate(45 629.5 486.9)"/>
<rect x="592.6" y="470.4" width="33" height="33" rx="9" fill="#c88018" transform="rotate(45 609.1 486.9)"/>
<rect x="551.7" y="470.4" width="33" height="33" rx="9" fill="#c08010" transform="rotate(45 568.2 486.9)"/>
<rect x="531.2" y="470.4" width="33" height="33" rx="9" fill="#c88010" transform="rotate(45 547.8 486.9)"/>
<rect x="510.8" y="470.4" width="33" height="33" rx="9" fill="#c08018" transform="rotate(45 527.3 486.9)"/>
<rect x="449.4" y="470.4" width="33" height="33" rx="9" fill="#c86878" transform="rotate(45 465.9 486.9)"/>
<rect x="429.0" y="470.4" width="33" height="33" rx="9" fill="#d060c0" transform="rotate(45 445.5 486.9)"/>
<rect x="408.5" y="470.4" width="33" height="33" rx="9" fill="#d858a0" transform="rotate(45 425.0 486.9)"/>
<rect x="367.6" y="470.4" width="33" height="33" rx="9" fill="#f05888" transform="rotate(45 384.1 486.9)"/>
<rect x="347.2" y="470.4" width="33" height="33" rx="9" fill="#e850a8" transform="rotate(45 363.7 486.9)"/>
<rect x="326.8" y="470.4" width="33" height="33" rx="9" fill="#c848a8" transform="rotate(45 343.2 486.9)"/>
<rect x="265.4" y="470.4" width="33" height="33" rx="9" fill="#c030d8" transform="rotate(45 281.9 486.9)"/>
<rect x="244.9" y="470.4" width="33" height="33" rx="9" fill="#b038f0" transform="rotate(45 261.4 486.9)"/>
<rect x="224.5" y="470.4" width="33" height="33" rx="9" fill="#4058f0" transform="rotate(45 241.0 486.9)"/>
<rect x="1226.5" y="449.9" width="33" height="33" rx="9" fill="#c0a8f0" transform="rotate(45 1243.0 466.4)"/>
<rect x="1206.1" y="449.9" width="33" height="33" rx="9" fill="#90a0f0" transform="rotate(45 1222.6 466.4)"/>
<rect x="1185.7" y="449.9" width="33" height="33" rx="9" fill="#a048e0" transform="rotate(45 1202.2 466.4)"/>
<rect x="1165.2" y="449.9" width="33" height="33" rx="9" fill="#7050e0" transform="rotate(45 1181.7 466.4)"/>
<rect x="1144.8" y="449.9" width="33" height="33" rx="9" fill="#6050f0" transform="rotate(45 1161.2 466.4)"/>
<rect x="1124.3" y="449.9" width="33" height="33" rx="9" fill="#58a8e8" transform="rotate(45 1140.8 466.4)"/>
<rect x="1103.8" y="449.9" width="33" height="33" rx="9" fill="#4850e0" transform="rotate(45 1120.3 466.4)"/>
<rect x="1083.4" y="449.9" width="33" height="33" rx="9" fill="#68b8f0" transform="rotate(45 1099.9 466.4)"/>
<rect x="1022.0" y="449.9" width="33" height="33" rx="9" fill="#a090f8" transform="rotate(45 1038.5 466.4)"/>
<rect x="1001.6" y="449.9" width="33" height="33" rx="9" fill="#9888f8" transform="rotate(45 1018.1 466.4)"/>
<rect x="981.1" y="449.9" width="33" height="33" rx="9" fill="#905858" transform="rotate(45 997.6 466.4)"/>
<rect x="919.8" y="449.9" width="33" height="33" rx="9" fill="#808028" transform="rotate(45 936.3 466.4)"/>
<rect x="899.4" y="449.9" width="33" height="33" rx="9" fill="#a07020" transform="rotate(45 915.9 466.4)"/>
<rect x="878.9" y="449.9" width="33" height="33" rx="9" fill="#8890c8" transform="rotate(45 895.4 466.4)"/>
<rect x="817.5" y="449.9" width="33" height="33" rx="9" fill="#88a0d8" transform="rotate(45 834.0 466.4)"/>
<rect x="797.1" y="449.9" width="33" height="33" rx="9" fill="#90a8e0" transform="rotate(45 813.6 466.4)"/>
<rect x="776.6" y="449.9" width="33" height="33" rx="9" fill="#a080c8" transform="rotate(45 793.1 466.4)"/>
<rect x="715.3" y="449.9" width="33" height="33" rx="9" fill="#a83010" transform="rotate(45 731.8 466.4)"/>
<rect x="694.8" y="449.9" width="33" height="33" rx="9" fill="#a82828" transform="rotate(45 711.3 466.4)"/>
<rect x="674.4" y="449.9" width="33" height="33" rx="9" fill="#a03838" transform="rotate(45 690.9 466.4)"/>
<rect x="654.0" y="449.9" width="33" height="33" rx="9" fill="#a84848" transform="rotate(45 670.5 466.4)"/>
<rect x="633.5" y="449.9" width="33" height="33" rx="9" fill="#a84848" transform="rotate(45 650.0 466.4)"/>
<rect x="613.0" y="449.9" width="33" height="33" rx="9" fill="#a85048" transform="rotate(45 629.5 466.4)"/>
<rect x="592.6" y="449.9" width="33" height="33" rx="9" fill="#a85048" transform="rotate(45 609.1 466.4)"/>
<rect x="531.2" y="449.9" width="33" height="33" rx="9" fill="#c88050" transform="rotate(45 547.8 466.4)"/>
<rect x="510.8" y="449.9" width="33" height="33" rx="9" fill="#c06848" transform="rotate(45 527.3 466.4)"/>
<rect x="490.3" y="449.9" width="33" height="33" rx="9" fill="#c06850" transform="rotate(45 506.8 466.4)"/>
<rect x="469.9" y="449.9" width="33" height="33" rx="9" fill="#c05878" transform="rotate(45 486.4 466.4)"/>
<rect x="449.4" y="449.9" width="33" height="33" rx="9" fill="#c860a8" transform="rotate(45 465.9 466.4)"/>
<rect x="429.0" y="449.9" width="33" height="33" rx="9" fill="#c84888" transform="rotate(45 445.5 466.4)"/>
<rect x="408.5" y="449.9" width="33" height="33" rx="9" fill="#d85080" transform="rotate(45 425.0 466.4)"/>
<rect x="347.2" y="449.9" width="33" height="33" rx="9" fill="#c84090" transform="rotate(45 363.7 466.4)"/>
<rect x="326.8" y="449.9" width="33" height="33" rx="9" fill="#e838c0" transform="rotate(45 343.2 466.4)"/>
<rect x="306.3" y="449.9" width="33" height="33" rx="9" fill="#e808c8" transform="rotate(45 322.8 466.4)"/>
<rect x="285.9" y="449.9" width="33" height="33" rx="9" fill="#a810b0" transform="rotate(45 302.4 466.4)"/>
<rect x="265.4" y="449.9" width="33" height="33" rx="9" fill="#c830f0" transform="rotate(45 281.9 466.4)"/>
<rect x="244.9" y="449.9" width="33" height="33" rx="9" fill="#7840d8" transform="rotate(45 261.4 466.4)"/>
<rect x="1206.1" y="429.5" width="33" height="33" rx="9" fill="#9868d8" transform="rotate(45 1222.6 446.0)"/>
<rect x="1185.7" y="429.5" width="33" height="33" rx="9" fill="#90a0d8" transform="rotate(45 1202.2 446.0)"/>
<rect x="1165.2" y="429.5" width="33" height="33" rx="9" fill="#a048e8" transform="rotate(45 1181.7 446.0)"/>
<rect x="1144.8" y="429.5" width="33" height="33" rx="9" fill="#9888f8" transform="rotate(45 1161.2 446.0)"/>
<rect x="1124.3" y="429.5" width="33" height="33" rx="9" fill="#5040d8" transform="rotate(45 1140.8 446.0)"/>
<rect x="1103.8" y="429.5" width="33" height="33" rx="9" fill="#5080e0" transform="rotate(45 1120.3 446.0)"/>
<rect x="1022.0" y="429.5" width="33" height="33" rx="9" fill="#905870" transform="rotate(45 1038.5 446.0)"/>
<rect x="1001.6" y="429.5" width="33" height="33" rx="9" fill="#9860f8" transform="rotate(45 1018.1 446.0)"/>
<rect x="981.1" y="429.5" width="33" height="33" rx="9" fill="#906070" transform="rotate(45 997.6 446.0)"/>
<rect x="899.4" y="429.5" width="33" height="33" rx="9" fill="#7a7a28" transform="rotate(45 915.9 446.0)"/>
<rect x="878.9" y="429.5" width="33" height="33" rx="9" fill="#a87820" transform="rotate(45 895.4 446.0)"/>
<rect x="817.5" y="429.5" width="33" height="33" rx="9" fill="#7088b8" transform="rotate(45 834.0 446.0)"/>
<rect x="797.1" y="429.5" width="33" height="33" rx="9" fill="#90a8d8" transform="rotate(45 813.6 446.0)"/>
<rect x="694.8" y="429.5" width="33" height="33" rx="9" fill="#a02020" transform="rotate(45 711.3 446.0)"/>
<rect x="674.4" y="429.5" width="33" height="33" rx="9" fill="#a02818" transform="rotate(45 690.9 446.0)"/>
<rect x="654.0" y="429.5" width="33" height="33" rx="9" fill="#b83818" transform="rotate(45 670.5 446.0)"/>
<rect x="633.5" y="429.5" width="33" height="33" rx="9" fill="#b84020" transform="rotate(45 650.0 446.0)"/>
<rect x="613.0" y="429.5" width="33" height="33" rx="9" fill="#b04028" transform="rotate(45 629.5 446.0)"/>
<rect x="592.6" y="429.5" width="33" height="33" rx="9" fill="#b04830" transform="rotate(45 609.1 446.0)"/>
<rect x="510.8" y="429.5" width="33" height="33" rx="9" fill="#c85850" transform="rotate(45 527.3 446.0)"/>
<rect x="490.3" y="429.5" width="33" height="33" rx="9" fill="#c05878" transform="rotate(45 506.8 446.0)"/>
<rect x="469.9" y="429.5" width="33" height="33" rx="9" fill="#c86888" transform="rotate(45 486.4 446.0)"/>
<rect x="449.4" y="429.5" width="33" height="33" rx="9" fill="#b03070" transform="rotate(45 465.9 446.0)"/>
<rect x="429.0" y="429.5" width="33" height="33" rx="9" fill="#d05868" transform="rotate(45 445.5 446.0)"/>
<rect x="408.5" y="429.5" width="33" height="33" rx="9" fill="#d85060" transform="rotate(45 425.0 446.0)"/>
<rect x="326.8" y="429.5" width="33" height="33" rx="9" fill="#e010c0" transform="rotate(45 343.2 446.0)"/>
<rect x="306.3" y="429.5" width="33" height="33" rx="9" fill="#b828b8" transform="rotate(45 322.8 446.0)"/>
<rect x="285.9" y="429.5" width="33" height="33" rx="9" fill="#d820e8" transform="rotate(45 302.4 446.0)"/>
<rect x="265.4" y="429.5" width="33" height="33" rx="9" fill="#8a3cd8" transform="rotate(45 281.9 446.0)"/>
<rect x="291.4" y="573.6" width="33" height="33" rx="9" fill="#e06890" transform="rotate(45 307.9 590.1)"/>
<rect x="674.4" y="490.9" width="33" height="33" rx="9" fill="#e0a888" transform="rotate(45 690.9 507.4)"/>
</svg>

<!-- ===== toolbar icons ===== -->
<svg style="left:0;top:0" width="74" height="620" viewBox="0 0 74 620">
<g fill="#cfcfcf" stroke="none">
<!-- separators -->
<g fill="#5f5f5f"><rect x="8" y="143" width="56" height="1"/><rect x="8" y="244" width="56" height="1"/><rect x="8" y="321" width="56" height="1"/><rect x="8" y="375" width="56" height="1"/><rect x="8" y="403" width="56" height="1"/><rect x="8" y="456" width="56" height="1"/></g>
<!-- selection (active) -->
<rect x="7" y="94" width="28" height="22" rx="3" fill="#2d2d2d"/>
<path d="M16.500 97.500v15.500l4-4.800 6.700-.700z" fill="none" stroke="#e8e8e8" stroke-width="1.4" stroke-linejoin="round"/>
<!-- direct selection -->
<path d="M46 96v18l4.500-5.500 7.500-.800z"/>
<path d="M65 117v-4l-4 4z" fill="#aaa"/>
<!-- magic wand -->
<path d="M14 137l9-9 2 2-9 9z"/><path d="M25 122l1 2 2 1-2 1-1 2-1-2-2-1 2-1zM19 123l.7 1.3 1.3.7-1.3.7-.7 1.3-.7-1.3L17 125l1.300-.7zM28 128l.6 1 1 .6-1 .6-.6 1-.6-1-1-.6 1-.6z"/>
<!-- lasso -->
<path d="M44 128c0-4 4-6 8-6s8 2 8 5-2 4-4 4" fill="none" stroke="#cfcfcf" stroke-width="1.6"/><circle cx="46" cy="132" r="2" fill="none" stroke="#cfcfcf" stroke-width="1.3"/><path d="M46 134c0 2 1 3 2 4" fill="none" stroke="#cfcfcf" stroke-width="1.3"/>
<path d="M51 127l9 7-4 1-2 4z"/>
<!-- pen -->
<path d="M13 166l3-9 6-5 6 5-6 6-9 3zM23 150l2-2 5 5-2 2z"/><circle cx="19" cy="160" r="1.3" fill="#535353"/>
<path d="M35 170v-4l-4 4z" fill="#aaa"/>
<!-- curvature pen -->
<path d="M46 165l3-8 5-5 5 5-5 5-8 3zM55 150l2-2 5 5-2 2z"/><circle cx="52" cy="159" r="1.2" fill="#535353"/>
<path d="M42 153c2-4 5 0 3 4s-3 8 2 8" fill="none" stroke="#cfcfcf" stroke-width="1.4"/>
<!-- type -->
<path d="M14 175h14v4h-1.500l-.5-2h-3.500v10h2v1.500h-7V187h2v-10h-3.500l-.5 2H14z"/>
<path d="M35 194v-4l-4 4z" fill="#aaa"/>
<!-- line -->
<path d="M44 189l14-14" stroke="#cfcfcf" stroke-width="1.6"/><path d="M65 194v-4l-4 4z" fill="#aaa"/>
<!-- rect -->
<rect x="13.700" y="200.700" width="14.600" height="12.600" fill="#757575" stroke="#cfcfcf" stroke-width="1.4"/><path d="M35 218v-4l-4 4z" fill="#aaa"/>
<!-- brush -->
<path d="M58 198c1 0 1.500 1 1 2l-7 9-2.500-2zM48.500 208l2.500 2c0 3-3 4-7 4 2-1 2-3 4.500-6z"/><path d="M65 218v-4l-4 4z" fill="#aaa"/>
<!-- pencil -->
<path d="M13 238l1.500-5 9-9 3.500 3.500-9 9zM25 223l1.500-1.500c1-1 4.500 2.500 3.500 3.500L28.500 226.500z"/><path d="M35 242v-4l-4 4z" fill="#aaa"/>
<!-- eraser -->
<path d="M43 230l9-8 8 6-9 9z"/><path d="M43.500 231l3.500-3 7 5.500-3 3z" fill="#535353" stroke="#cfcfcf" stroke-width="1"/><path d="M65 242v-4l-4 4z" fill="#aaa"/>
<!-- rotate -->
<path d="M16 254a7.500 7.500 0 11-1 9" fill="none" stroke="#cfcfcf" stroke-width="1.600"/><path d="M13 251l1 6 5-2z"/><path d="M16 266a7.500 7.500 0 0011 0" fill="none" stroke="#535353" stroke-width="2" stroke-dasharray="1.500 1.500"/><path d="M35 269v-4l-4 4z" fill="#aaa"/>
<!-- scale -->
<rect x="42.700" y="259.700" width="8.600" height="7.600" fill="none" stroke="#cfcfcf" stroke-width="1.400"/><rect x="46.700" y="251.700" width="13.600" height="11.600" fill="none" stroke="#cfcfcf" stroke-width="1.400"/><path d="M51 260l6-6M53.500 253.500h4v4" fill="none" stroke="#cfcfcf" stroke-width="1.300"/><path d="M65 269v-4l-4 4z" fill="#aaa"/>
<!-- warp -->
<path d="M14 288c1-6 4-10 6-7s1 5 4 4 4-5 6-3-1 8-7 8-5-5-9-2z"/><circle cx="13.500" cy="289.500" r="1.600" fill="#535353" stroke="#cfcfcf" stroke-width="1"/><circle cx="19" cy="283" r="1.600" fill="#535353" stroke="#cfcfcf" stroke-width="1"/><path d="M35 294v-4l-4 4z" fill="#aaa"/>
<!-- pin -->
<path d="M52 275l8 8-2 1-2-1-3 3 0 4-8-8 4 0 3-3-1-2zM46 287l-4 5" stroke="#cfcfcf" stroke-width="1.400"/><path d="M65 294v-4l-4 4z" fill="#aaa"/>
<!-- shape builder -->
<ellipse cx="19" cy="305" rx="7" ry="4.500" fill="none" stroke="#cfcfcf" stroke-width="1.400"/><circle cx="15" cy="307" r="3" fill="#535353" stroke="#cfcfcf" stroke-width="1.200"/><path d="M15 305h7" stroke="#cfcfcf" stroke-width="1" stroke-dasharray="1 1"/><path d="M24 304l8 6-4 .500-1.500 4z"/><path d="M35 318v-4l-4 4z" fill="#aaa"/>
<!-- perspective grid -->
<path d="M43 300v14l8-2v-13zM43 304.500l8-1M43 309l8-.500M47 299.500v13.500M51 299l8 12M51 303.500l3 1M51 308h6M52 312h10M54 309.500h8M55 307h6" fill="none" stroke="#cfcfcf" stroke-width="1.100"/><path d="M65 318v-4l-4 4z" fill="#aaa"/>
<!-- mesh -->
<rect x="13.600" y="329.600" width="14.800" height="12.800" fill="none" stroke="#cfcfcf" stroke-width="1.200"/><path d="M14 334c4-2 6 2 14-1M14 338c5 2 8-3 14 0M18 330c2 4-2 8 1 12M23 330c-2 4 3 8 0 12" fill="none" stroke="#cfcfcf" stroke-width="1.100"/>
<!-- gradient -->
<linearGradient id="tg" x1="0" x2="1"><stop offset="0" stop-color="#555"/><stop offset="1" stop-color="#e0e0e0"/></linearGradient>
<rect x="43.600" y="329.600" width="15" height="13" fill="url(#tg)" stroke="#cfcfcf" stroke-width="1.200"/>
<!-- eyedropper -->
<path d="M12 368l1.500-4.500 8-8 3 3-8 8zM22 353l2-2c1.500-1.500 5 2 3.500 3.500l-2 2 1 1-1.500 1.500-5.500-5.500 1.500-1.500z" /><path d="M15 364.500l6-6" stroke="#535353" stroke-width="1.400"/><path d="M35 372v-4l-4 4z" fill="#aaa"/>
<!-- blend -->
<rect x="42" y="353" width="8" height="8"/><circle cx="51" cy="360" r="4.500" fill="#8a8a8a"/><circle cx="56" cy="363" r="3.800" fill="#535353" stroke="#cfcfcf" stroke-width="1.300"/>
<!-- symbol sprayer -->
<rect x="20" y="387" width="9" height="10" rx="1" fill="none" stroke="#cfcfcf" stroke-width="1.400"/><rect x="23" y="382" width="4" height="4"/><circle cx="24.500" cy="392" r="2" fill="none" stroke="#cfcfcf" stroke-width="1.200"/><path d="M12 382h2v2h-2zM15.500 382h2v2h-2zM19 382h2v2h-2zM12 385.500h2v2h-2zM15.500 385.500h2v2h-2zM12 389h2v2h-2z"/><path d="M35 400v-4l-4 4z" fill="#aaa"/>
<!-- graph -->
<path d="M42.700 381v15.300H60" fill="none" stroke="#cfcfcf" stroke-width="1.300"/><rect x="45" y="388" width="3" height="8"/><rect x="50" y="382" width="3" height="14"/><rect x="55" y="385" width="3" height="11"/><path d="M65 400v-4l-4 4z" fill="#aaa"/>
<!-- artboard -->
<path d="M16 409v6M11 414h7" stroke="#cfcfcf" stroke-width="1.200"/><path d="M16.600 414.600h8l3.500 3.500v7.300H16.600z" fill="#757575" stroke="#cfcfcf" stroke-width="1.200"/>
<!-- slice -->
<path d="M43 426l9-13 4-3 2 5-4 4z" fill="none" stroke="#cfcfcf" stroke-width="1.400"/><path d="M52 413l4-3 2 5-3 3z"/><path d="M65 429v-4l-4 4z" fill="#aaa"/>
<!-- hand -->
<path d="M15 441c-1-2-3-4-2-5s3 1 4 2v-6c0-1.500 2-1.500 2 0v-1.500c0-1.500 2-1.500 2 0v1c0-1.500 2-1.500 2 0v1.500c0-1.300 2-1.300 2 0v8c0 4-2 6-3 7h-6c-1-2-2-4-3-7z"/><path d="M35 453v-4l-4 4z" fill="#aaa"/>
<!-- zoom -->
<circle cx="49" cy="439" r="5.500" fill="none" stroke="#cfcfcf" stroke-width="1.700"/><path d="M53 443.500l6 6" stroke="#cfcfcf" stroke-width="2.400" stroke-linecap="round"/>
</g>
<!-- fill / stroke -->
<rect x="24.500" y="480.500" width="35" height="34" fill="#fff" stroke="#3a3a3a" stroke-width="1"/>
<rect x="33.500" y="489.500" width="16" height="15" fill="#535353" stroke="#3a3a3a" stroke-width="1"/>
<path d="M25 514L59 481" stroke="#e0111b" stroke-width="2.400"/>
<rect x="6.500" y="461.500" width="35" height="35" fill="#fff" stroke="#3a3a3a" stroke-width="1"/>
<path d="M52 466h5v5M55 463l-3 3 3 3M57 471l-2.500 2.500-2.500-2.500" fill="none" stroke="#d8d8d8" stroke-width="1.300"/>
<rect x="10.500" y="506.500" width="7" height="7" fill="#333" stroke="#e0e0e0" stroke-width="1"/><rect x="7.500" y="503.500" width="7" height="7" fill="#fff" stroke="#333" stroke-width="1"/>
<!-- color mode row -->
<rect x="7" y="522" width="18" height="19" fill="#3d3d3d"/>
<rect x="10" y="525.500" width="12" height="12" fill="#fff" stroke="#1d1d1d" stroke-width="1.400"/>
<linearGradient id="tg2" x1="0" x2="1"><stop offset="0" stop-color="#fff"/><stop offset="1" stop-color="#222"/></linearGradient>
<rect x="29.500" y="525.500" width="12" height="12" fill="url(#tg2)" stroke="#1d1d1d" stroke-width="1.400"/>
<rect x="49.500" y="525.500" width="12" height="12" fill="#fff" stroke="#1d1d1d" stroke-width="1.400"/><path d="M50 537l11-11" stroke="#e0111b" stroke-width="2.200"/>
<!-- draw mode row -->
<rect x="7" y="546" width="18" height="19" fill="#3d3d3d"/>
<g fill="none" stroke="#d0d0d0" stroke-width="1.400"><circle cx="15" cy="554.500" r="4.500"/><circle cx="36" cy="554.500" r="4.500"/></g>
<rect x="16" y="556" width="6" height="6" fill="#bdbdbd"/><rect x="37" y="556" width="6" height="6" fill="#bdbdbd"/>
<rect x="47.500" y="546.500" width="17" height="18" fill="none" stroke="#5c5c5c"/><circle cx="56" cy="554.500" r="4" fill="none" stroke="#666" stroke-width="1.400"/><circle cx="56" cy="554.500" r="1.500" fill="#666"/>
<!-- screen mode -->
<rect x="25.500" y="577.500" width="13" height="11" fill="#6a6a6a" stroke="#cfcfcf" stroke-width="1.200"/><rect x="33.500" y="573.500" width="13" height="10" fill="#6a6a6a" stroke="#cfcfcf" stroke-width="1.200"/><path d="M34 575h12M26 579h7" stroke="#cfcfcf" stroke-width="1.500"/>
</svg>

<!-- ===== right dock (Libraries) ===== -->
<div class="abs" id="dock" style="left:1668px;top:65px;width:252px;height:954px;background:#535353">
  <div class="abs" style="left:0;top:0;width:252px;height:12px;background:#424242;border-top:1px solid #3a3a3a"></div>
  <svg style="left:238px;top:3px" width="9" height="6"><path d="M0 0l3 3-3 3zM4.500 0l3 3-3 3z" fill="#cfcfcf"/></svg>
  <div class="abs" style="left:0;top:12px;width:252px;height:18px;background:#424242;border-top:1px solid #383838;border-bottom:1px solid #3c3c3c"></div>
  <div class="abs" style="left:40px;top:12px;width:38px;height:18px;background:#535353;border-left:1px solid #3a3a3a;border-right:1px solid #3a3a3a"></div>
  <div class="t" style="left:9px;top:16px;font-size:12px;color:#a8a8a8">属性</div>
  <div class="t" style="left:48px;top:16px;font-size:12px;color:#f0f0f0">库</div>
  <svg style="left:234px;top:17px" width="11" height="8"><path d="M0 .500h11M0 2.800h11M0 5.100h11M0 7.400h11" stroke="#c8c8c8" stroke-width="1"/></svg>
  <!-- search row -->
  <div class="t" style="left:27px;top:41px;font-size:11.500px;color:#636363;font-style:italic;transform:skewX(-12deg)">搜索当前库</div>
  <svg style="left:232px;top:45px" width="9" height="6"><path d="M1 1l3.500 3.500L8 1" stroke="#666" stroke-width="1.500" fill="none"/></svg>
  <div class="abs" style="left:26px;top:59px;width:216px;height:1px;background:#5a5a5a"></div>
  <div class="abs" style="left:26px;top:68px;width:216px;height:16px;background:#4b4b4b;border:1px solid #575757;border-radius:2px"></div>
  <svg style="left:230px;top:73px" width="9" height="6"><path d="M1 1l3.500 3.500L8 1" stroke="#6c6c6c" stroke-width="1.500" fill="none"/></svg>
  <div class="abs" style="left:201px;top:92px;width:18px;height:18px;background:#3d3d3d;border-radius:2px"></div>
  <svg style="left:204px;top:95px" width="12" height="12"><rect x="0" y="0" width="5" height="5" fill="#dcdcdc"/><rect x="7" y="0" width="5" height="5" fill="#dcdcdc"/><rect x="0" y="7" width="5" height="5" fill="#dcdcdc"/><rect x="7" y="7" width="5" height="5" fill="#dcdcdc"/></svg>
  <svg style="left:225px;top:95px" width="14" height="12"><path d="M0 1.500h3M4.500 1.500H14M0 6h3M4.500 6H14M0 10.500h3M4.500 10.500H14" stroke="#dcdcdc" stroke-width="2"/></svg>
  <div class="abs" style="left:26px;top:115px;width:216px;height:1px;background:#5a5a5a"></div>
  <!-- CC icon -->
  <svg style="left:102px;top:473px" width="50" height="38" viewBox="0 0 50 38"><g fill="none" stroke="#727272" stroke-width="1.400"><path d="M3 3l8 8M11 3l-8 8"/><ellipse cx="22" cy="23" rx="12" ry="9.500"/><ellipse cx="33" cy="18" rx="13" ry="11"/><path d="M17 26c4 5 11 3 14-2M22 14c5-3 11 0 13 4"/></g></svg>
  <div class="abs" style="left:0;top:526px;width:252px;text-align:center;font-size:12px;line-height:16px;color:#c4c4c4;white-space:nowrap"><span style="position:relative;left:0">初始化 Creative Cloud Libraries 时出</span><br>现问题</div>
  <div class="abs" style="left:0;top:573px;width:252px;text-align:center;font-size:12px;font-weight:bold;color:#3d8fe8">更多信息</div>
  <!-- footer -->
  <div class="abs" style="left:0;top:934px;width:252px;height:1px;background:#4a4a4a"></div>
  <div class="t" style="left:154px;top:940px;font-size:11px;color:#e0e0e0">-- KB</div>
  <svg style="left:191px;top:937px" width="20" height="14" viewBox="0 0 20 14"><path d="M4 11a3.500 3.500 0 01.500-7 5 5 0 019.500 1 3 3 0 010 6z" fill="#8a8a8a"/><circle cx="15" cy="9.500" r="4" fill="#535353" stroke="#d0d0d0" stroke-width="1.200"/><path d="M13.500 8l3 3M16.500 8l-3 3" stroke="#d0d0d0" stroke-width="1.100"/></svg>
  <svg style="left:220px;top:936px" width="12" height="14" viewBox="0 0 12 14"><path d="M0 2.500h12M4 2V.700h4V2M1.500 3l1 10.300h7l1-10.300M4.500 5v6.500M7.500 5v6.500" fill="none" stroke="#8a8a8a" stroke-width="1.200"/></svg>
</div>

<!-- ===== small floating panel (d) ===== -->
<div class="panel" style="left:1693px;top:397px;width:58px;height:259px;border-radius:0 4px 0 0;border-left:none">
  <div class="phead" style="height:12px;border-radius:0 4px 0 0"></div>
  <svg style="left:26px;top:4px" width="8" height="6"><path d="M3.500 0L.500 3l3 3zM7.500 0L4.500 3l3 3z" fill="#d0d0d0"/></svg>
  <svg style="left:45px;top:3px" width="8" height="8"><path d="M1 1l6 6M7 1l-6 6" stroke="#d8d8d8" stroke-width="1.800"/></svg>
  <div class="ptabs" style="top:12px;height:19px;border-top:1px solid #383838;border-bottom:1px solid #3a3a3a"></div>
  <svg style="left:40px;top:19px" width="11" height="8"><path d="M0 .500h11M0 2.800h11M0 5.100h11M0 7.400h11" stroke="#c8c8c8" stroke-width="1"/></svg>
  <div class="abs" style="left:-1px;top:37px;width:52px;height:225px;border:1px solid #5b5b5b;border-left:none"></div>
  <!-- thumbnail -->
  <svg style="left:0;top:39px" width="19" height="33" viewBox="0 0 19 33"><rect width="19" height="33" fill="#e8ecf0"/><rect x="0" y="4" width="15" height="25" fill="#2a62a8"/><path d="M0 10c3-4 6-6 8-6 2 6 5 14 5 22-3 0-6-2-7-6-2 2-4 2-6 1z" fill="#f2d21c"/><path d="M9 5c3 4 5 12 5 20l1-1V6z" fill="#0e5a3a"/><path d="M0 22c3 1 5 0 6-2 1 4 3 6 6 7l-12 2z" fill="#1c4c8c"/></svg>
</div>

<!-- ===== swatches panel (c) ===== -->
<div class="panel" style="left:1693px;top:160px;width:118px;height:207px;border-radius:0 4px 0 0;border-left:none">
  <div class="phead" style="height:12px;border-radius:0 4px 0 0"></div>
  <svg style="left:88px;top:4px" width="8" height="6"><path d="M3.500 0L.500 3l3 3zM7.500 0L4.500 3l3 3z" fill="#d0d0d0"/></svg>
  <svg style="left:105px;top:3px" width="8" height="8"><path d="M1 1l6 6M7 1l-6 6" stroke="#d8d8d8" stroke-width="1.800"/></svg>
  <div class="ptabs" style="top:12px;height:19px;border-top:1px solid #383838;border-bottom:1px solid #3a3a3a"></div>
  <svg style="left:101px;top:18px" width="11" height="8"><path d="M0 .500h11M0 2.800h11M0 5.100h11M0 7.400h11" stroke="#c8c8c8" stroke-width="1"/></svg>
  <!-- view toggle -->
  <div class="abs" style="left:63px;top:38px;width:49px;height:23px;border:1px solid #5e5e5e;border-radius:3px"></div>
  <div class="abs" style="left:87px;top:38px;width:25px;height:23px;background:#2e2e2e;border-radius:0 3px 3px 0"></div>
  <svg style="left:68px;top:43px" width="13" height="13"><path d="M0 1h13M0 5h13M0 9h13M0 13h13" stroke="#c8c8c8" stroke-width="1.800"/></svg>
  <svg style="left:93px;top:43px" width="14" height="14"><g fill="#d0d0d0"><rect x="0" y="0" width="3.600" height="3.600"/><rect x="5" y="0" width="3.600" height="3.600"/><rect x="10" y="0" width="3.600" height="3.600"/><rect x="0" y="5" width="3.600" height="3.600"/><rect x="5" y="5" width="3.600" height="3.600"/><rect x="10" y="5" width="3.600" height="3.600"/><rect x="0" y="10" width="3.600" height="3.600"/><rect x="5" y="10" width="3.600" height="3.600"/><rect x="10" y="10" width="3.600" height="3.600"/></g></svg>
  <div class="abs" style="left:-1px;top:71px;width:113px;height:106px;border:1px solid #5b5b5b;border-left:none"></div>
  <!-- swatches -->
  <svg style="left:0;top:72px" width="96" height="74" viewBox="0 0 96 74">
   <defs><linearGradient id="sw1" x1="0" x2="1"><stop offset="0" stop-color="#fff"/><stop offset="1" stop-color="#000"/></linearGradient><linearGradient id="sw2" x1="0" x2="1"><stop offset="0" stop-color="#fff"/><stop offset="1" stop-color="#0a7ac4"/></linearGradient><linearGradient id="sw3" x1="0" x2="1"><stop offset="0" stop-color="#f0508c"/><stop offset="1" stop-color="#f8d8e4"/></linearGradient></defs>
   <g shape-rendering="crispEdges">
   <rect x="0" y="1" width="10" height="13" fill="#0000ff"/><rect x="10" y="1" width="14" height="13" fill="#ff00ff"/><rect x="24" y="1" width="14" height="13" fill="#d82a2a"/><rect x="38" y="1" width="14" height="13" fill="#ed1c24"/><rect x="52" y="1" width="14" height="13" fill="#f15a24"/><rect x="66" y="1" width="14" height="13" fill="#f7931e"/><rect x="80" y="1" width="14" height="13" fill="#fbb03b"/>
   <rect x="0" y="15" width="10" height="13" fill="#29abe2"/><rect x="10" y="15" width="14" height="13" fill="#0071bc"/><rect x="24" y="15" width="14" height="13" fill="#2e3192"/><rect x="38" y="15" width="14" height="13" fill="#1b1464"/><rect x="52" y="15" width="14" height="13" fill="#662d91"/><rect x="66" y="15" width="14" height="13" fill="#93278f"/><rect x="80" y="15" width="14" height="13" fill="#9e005d"/>
   <rect x="0" y="29" width="10" height="13" fill="#a67c52"/><rect x="10" y="29" width="14" height="13" fill="#8c6239"/><rect x="24" y="29" width="14" height="13" fill="#754c24"/><rect x="38" y="29" width="14" height="13" fill="#4a2410"/><rect x="52" y="29" width="14" height="13" fill="url(#sw1)"/><rect x="66" y="29" width="14" height="13" fill="url(#sw2)"/><rect x="80" y="29" width="14" height="13" fill="url(#sw3)"/>
   <rect x="0" y="59" width="10" height="14" fill="#c8c8c8"/><rect x="10" y="59" width="14" height="14" fill="#d8d8d8"/><rect x="24" y="59" width="14" height="14" fill="#e6e6e6"/><rect x="38" y="59" width="14" height="14" fill="#f4f4f4"/>
   </g>
   <g stroke="#535353" stroke-width="1"><path d="M10 0v74M24 0v74M38 0v74M52 0v44M66 0v44M80 0v44"/></g>
  </svg>
  <!-- footer icons -->
  <svg style="left:1px;top:182px" width="92" height="14" viewBox="0 0 92 14"><g fill="none" stroke="#c4c4c4" stroke-width="1.200"><rect x="-2" y="1.500" width="12" height="11"/><path d="M1 4.500h7M1 7h7M1 9.500h7"/></g><path d="M24 3h5l1 1.500h8v8H24z" fill="#c4c4c4"/><path d="M52 2h10v11h-6l-4-4z" fill="#c4c4c4"/><path d="M52 9h4v4" fill="#535353"/><g fill="none" stroke="#c4c4c4" stroke-width="1.200"><path d="M77 3.500h11M80.500 3V1.500h4V3M78.500 4l.800 9h6.400l.800-9M81 6v5.500M84 6v5.500"/></g></svg>
  <div class="abs" style="left:0;top:198px;width:118px;height:1px;background:#3f3f3f"></div>
</div>

<!-- ===== gradient panel (e) ===== -->
<div class="panel" style="left:1572px;top:647px;width:242px;height:256px;border-radius:4px 4px 0 0">
  <div class="phead" style="height:12px;border-radius:4px 4px 0 0"></div>
  <svg style="left:211px;top:4px" width="8" height="6"><path d="M3.500 0L.500 3l3 3zM7.500 0L4.500 3l3 3z" fill="#d0d0d0"/></svg>
  <svg style="left:229px;top:3px" width="8" height="8"><path d="M1 1l6 6M7 1l-6 6" stroke="#d8d8d8" stroke-width="1.800"/></svg>
  <div class="ptabs" style="top:12px;height:19px;border-top:1px solid #383838;border-bottom:1px solid #3a3a3a"></div>
  <svg style="left:224px;top:18px" width="11" height="8"><path d="M0 .500h11M0 2.800h11M0 5.100h11M0 7.400h11" stroke="#c8c8c8" stroke-width="1"/></svg>
  <div class="abs" style="left:10px;top:37px;width:225px;height:20px;background:#4a4a4a;border:1px solid #5c5c5c;border-radius:2px"></div>
  <svg style="left:221px;top:44px" width="9" height="6"><path d="M1 1l3.500 3.500L8 1" stroke="#f0f0f0" stroke-width="1.700" fill="none"/></svg>
  <div class="abs" style="left:122px;top:63px;width:14px;height:21px;border:1px solid #5c5c5c"></div>
  <div class="abs" style="left:139px;top:63px;width:20px;height:21px;border:1px solid #5c5c5c"></div>
  <svg style="left:124px;top:66px" width="34" height="16"><path d="M2 14V3h8M18 14V2h13" stroke="#747474" stroke-width="2.500" fill="none"/><path d="M23 14V7h8" stroke="#666" stroke-width="2" fill="none"/></svg>
  <!-- swatch -->
  <svg style="left:16px;top:82px" width="21" height="20"><rect x="1" y="1" width="19" height="18" fill="#fff" stroke="#333" stroke-width="1"/><path d="M1 19L20 1" stroke="#e0111b" stroke-width="2"/></svg>
  <svg style="left:72px;top:92px" width="16" height="14"><path d="M1 13h14M1 13L10 1M8 13a6 6 0 00-2.500-5" stroke="#8a8a8a" stroke-width="1.200" fill="none"/></svg>
  <div class="dfld" style="left:92px;top:89px;width:69px;height:20px"></div>
  <svg style="left:148px;top:97px" width="9" height="6"><path d="M1 1l3.500 3.500L8 1" stroke="#686868" stroke-width="1.500" fill="none"/></svg>
  <svg style="left:13px;top:114px" width="18" height="16"><g fill="none" stroke="#6c6c6c" stroke-width="1.100"><rect x="3" y="1" width="7" height="5"/><rect x="6" y="9" width="7" height="5"/><path d="M12 3h4l-2 2zM1 11h4l-2-2z" fill="#6c6c6c"/></g></svg>
  <svg style="left:71px;top:117px" width="18" height="16"><g fill="none" stroke="#8a8a8a" stroke-width="1.200"><ellipse cx="11" cy="7" rx="5.500" ry="3.500"/><path d="M2.500 1v12M.500 3l2-2 2 2M.500 11l2 2 2-2M5 14.500h12"/></g></svg>
  <div class="dfld" style="left:92px;top:114px;width:69px;height:20px"></div>
  <svg style="left:148px;top:122px" width="9" height="6"><path d="M1 1l3.500 3.500L8 1" stroke="#686868" stroke-width="1.500" fill="none"/></svg>
  <!-- gradient bar -->
  <div class="abs" style="left:11px;top:149px;width:194px;height:19px;background:linear-gradient(90deg,#ffffff 0%,#b9b4b4 35%,#6b6060 70%,#2d1f1f 100%);border:1px solid #3a3a3a"></div>
  <svg style="left:216px;top:152px" width="12" height="14" viewBox="0 0 12 14"><path d="M0 2.500h12M4 2V.700h4V2M1.500 3l1 10.300h7l1-10.300M4.500 5v6.500M7.500 5v6.500" fill="none" stroke="#6a6a6a" stroke-width="1.100"/></svg>
  <div class="t" style="left:32px;top:199px;font-size:11.500px;color:#6b6b6b">不透明度 :</div>
  <div class="dfld" style="left:92px;top:194px;width:69px;height:20px"></div>
  <svg style="left:148px;top:202px" width="9" height="6"><path d="M1 1l3.500 3.500L8 1" stroke="#686868" stroke-width="1.500" fill="none"/></svg>
  <div class="t" style="left:56px;top:225px;font-size:11.500px;color:#6b6b6b">位置 :</div>
  <div class="dfld" style="left:92px;top:220px;width:69px;height:20px"></div>
  <svg style="left:148px;top:228px" width="9" height="6"><path d="M1 1l3.500 3.500L8 1" stroke="#686868" stroke-width="1.500" fill="none"/></svg>
  <div class="abs" style="left:0;top:246px;width:240px;height:1px;background:#3f3f3f"></div>
  <div class="abs" style="left:108px;top:249px;width:24px;height:4px;background:repeating-linear-gradient(90deg,#3a3a3a 0 1px,transparent 1px 2px)"></div>
</div>

<!-- ===== color / character / pathfinder panel group (a) ===== -->
<div class="panel" style="left:1454px;top:90px;width:240px;height:650px;border-radius:4px 0 0 0;border:none;outline:1px solid #383838;outline-offset:-1px">
  <div class="phead" style="height:13px;border-radius:4px 0 0 0"></div>
  <svg style="left:209px;top:5px" width="8" height="6"><path d="M3.500 0L.500 3l3 3zM7.500 0L4.500 3l3 3z" fill="#d0d0d0"/></svg>
  <svg style="left:227px;top:4px" width="8" height="8"><path d="M1 1l6 6M7 1l-6 6" stroke="#d8d8d8" stroke-width="1.800"/></svg>
  <div class="ptabs" style="top:13px;height:19px;border-top:1px solid #383838;border-bottom:1px solid #3a3a3a"></div>
  <div class="abs" style="left:0;top:14px;width:45px;height:18px;background:#535353;border-right:1px solid #3a3a3a"></div>
  <div class="abs" style="left:46px;top:14px;width:38px;height:17px;background:#484848;border-right:1px solid #3a3a3a"></div>
  <div class="abs" style="left:85px;top:14px;width:38px;height:17px;background:#484848;border-right:1px solid #3a3a3a"></div>
  <svg style="left:4px;top:18px" width="6" height="11"><path d="M.800 4L3 1.500 5.200 4M.800 7L3 9.500 5.200 7" stroke="#c8c8c8" stroke-width="1.100" fill="none"/></svg>
  <div class="t" style="left:13px;top:18px;font-size:12.500px;color:#f4f4f4">颜色</div>
  <div class="t" style="left:51px;top:18px;font-size:12.500px;color:#a2a2a2">画笔</div>
  <div class="t" style="left:90px;top:18px;font-size:12.500px;color:#a2a2a2">符号</div>
  <svg style="left:222px;top:19px" width="11" height="8"><path d="M0 .500h11M0 2.800h11M0 5.100h11M0 7.400h11" stroke="#c8c8c8" stroke-width="1"/></svg>
  <!-- small icons -->
  <svg style="left:5px;top:37px" width="14" height="13"><rect x="4.500" y="4.500" width="8" height="7" fill="#222" stroke="#ddd" stroke-width="1"/><rect x="1.500" y="1.500" width="8" height="7" fill="#fff" stroke="#222" stroke-width="1"/></svg>
  <svg style="left:25px;top:38px" width="12" height="13"><path d="M2 4h5v6M4.500 1.500L2 4l2.500 2.500M4.500 8L7 10.500 9.500 8" fill="none" stroke="#d0d0d0" stroke-width="1.300"/></svg>
  <!-- fill/stroke -->
  <svg style="left:5px;top:56px" width="32" height="30"><rect x="11.500" y="11.500" width="18" height="17" fill="#fff" stroke="#444" stroke-width="1"/><rect x="16.500" y="16.500" width="8" height="7" fill="#535353"/><path d="M12 28L29 12" stroke="#e0111b" stroke-width="2"/><rect x="1.500" y="1.500" width="18" height="18" fill="#fff" stroke="#444" stroke-width="1"/></svg>
  <!-- sliders -->
  <div class="t" style="left:53px;top:45px;font-size:12px;color:#c8c8c8;font-family:'Liberation Serif',serif">R</div>
  <div class="abs" style="left:71px;top:48px;width:102px;height:4px;background:linear-gradient(90deg,#00ffff,#ffffff)"></div>
  <svg style="left:168px;top:52px" width="10" height="9"><path d="M5 0l4.500 4v4.500h-9V4z" fill="#c0c0c0"/></svg>
  <div class="fld" style="left:181px;top:41px;width:35px;height:19px;border-color:#5a5a5a"></div>
  <div class="t" style="left:186px;top:45px;font-size:11.500px;color:#f2f2f2">255</div>
  <div class="t" style="left:53px;top:78px;font-size:12px;color:#c8c8c8;font-family:'Liberation Serif',serif">G</div>
  <div class="abs" style="left:71px;top:81px;width:102px;height:4px;background:linear-gradient(90deg,#ff00ff,#ffffff)"></div>
  <svg style="left:168px;top:85px" width="10" height="9"><path d="M5 0l4.500 4v4.500h-9V4z" fill="#c0c0c0"/></svg>
  <div class="fld" style="left:181px;top:74px;width:35px;height:19px;border-color:#5a5a5a"></div>
  <div class="t" style="left:186px;top:78px;font-size:11.500px;color:#f2f2f2">255</div>
  <div class="t" style="left:53px;top:111px;font-size:12px;color:#c8c8c8;font-family:'Liberation Serif',serif">B</div>
  <div class="abs" style="left:71px;top:114px;width:102px;height:4px;background:linear-gradient(90deg,#ffff00,#ffffff)"></div>
  <svg style="left:168px;top:118px" width="10" height="9"><path d="M5 0l4.500 4v4.500h-9V4z" fill="#c0c0c0"/></svg>
  <div class="fld" style="left:181px;top:107px;width:35px;height:19px;border-color:#5a5a5a"></div>
  <div class="t" style="left:186px;top:111px;font-size:11.500px;color:#f2f2f2">255</div>
  <div class="t" style="left:167px;top:148px;font-size:12px;color:#c8c8c8">#</div>
  <div class="fld" style="left:177px;top:143px;width:45px;height:20px;border-color:#5a5a5a"></div>
  <div class="t" style="left:183px;top:146px;font-size:12px;color:#f2f2f2;font-family:'Liberation Mono',monospace;letter-spacing:-1.400px">ffffff</div>
  <!-- spectrum -->
  <div class="abs" style="left:6px;top:170px;width:216px;height:22px;background:linear-gradient(180deg,rgba(255,255,255,.95) 0%,rgba(255,255,255,0) 48%,rgba(0,0,0,0) 52%,rgba(0,0,0,1) 100%),linear-gradient(90deg,#ff0000 0%,#ffff00 12%,#00ff00 25%,#00ffff 42%,#0000ff 67%,#ff00ff 83%,#ff0000 100%)"></div>
  <!-- character section -->
  <div class="ptabs" style="top:202px;height:18px;border-top:1px solid #383838;border-bottom:1px solid #3a3a3a"></div>
  <div class="abs" style="left:0;top:203px;width:160px;height:16px;background:#484848;border-right:1px solid #3a3a3a"></div>
  <div class="t" style="right:84px;top:204px;font-size:13px;color:#a0a0a0">OpenType</div>
  <svg style="left:222px;top:207px" width="11" height="8"><path d="M0 .500h11M0 2.800h11M0 5.100h11M0 7.400h11" stroke="#c8c8c8" stroke-width="1"/></svg>
  <div class="fld" style="left:8px;top:227px;width:217px;height:20px;border-color:#5a5a5a"></div>
  <div class="abs" style="left:207px;top:228px;width:1px;height:18px;background:#5a5a5a"></div>
  <svg style="left:212px;top:235px" width="9" height="6"><path d="M1 1l3.500 3.500L8 1" stroke="#f0f0f0" stroke-width="1.700" fill="none"/></svg>
  <div class="fld" style="left:8px;top:253px;width:225px;height:20px;border-color:#5a5a5a"></div>
  <div class="abs" style="left:215px;top:254px;width:1px;height:18px;background:#5a5a5a"></div>
  <svg style="left:220px;top:261px" width="9" height="6"><path d="M1 1l3.500 3.500L8 1" stroke="#f0f0f0" stroke-width="1.700" fill="none"/></svg>
  <div class="abs" style="left:6px;top:277px;width:228px;height:1px;background:#484848"></div>
  <!-- rows with steppers: tops at 286, 312, 337, 430 -->
  <div class="fld" style="left:153px;top:286px;width:80px;height:20px;border-color:#5a5a5a"></div><div class="abs" style="left:171px;top:287px;width:1px;height:18px;background:#5a5a5a"></div><div class="abs" style="left:214px;top:287px;width:1px;height:18px;background:#5a5a5a"></div>
  <svg style="left:158px;top:289px" width="9" height="14"><path d="M1 5l3.500-3.500L8 5M1 9l3.500 3.500L8 9" stroke="#e8e8e8" stroke-width="1.500" fill="none"/></svg>
  <svg style="left:220px;top:294px" width="9" height="6"><path d="M1 1l3.500 3.500L8 1" stroke="#f0f0f0" stroke-width="1.700" fill="none"/></svg>
  <div class="t" style="left:175px;top:290px;font-size:11.500px;color:#f2f2f2;font-family:'Liberation Mono',monospace;letter-spacing:-1.200px">(14.4 )</div>
  <svg style="left:136px;top:287px" width="14" height="19"><g fill="none" stroke="#c8c8c8" stroke-width="1.200"><path d="M3 7.500L7 .500l4 7M4.500 5h5M3 17l4-7 4 7M4.500 14.500h5M1.500 8.700h11M1.500 18.200h11"/></g></svg>
  <div class="fld" style="left:153px;top:312px;width:80px;height:20px;border-color:#5a5a5a"></div><div class="abs" style="left:171px;top:313px;width:1px;height:18px;background:#5a5a5a"></div><div class="abs" style="left:214px;top:313px;width:1px;height:18px;background:#5a5a5a"></div>
  <svg style="left:158px;top:315px" width="9" height="14"><path d="M1 5l3.500-3.500L8 5M1 9l3.500 3.500L8 9" stroke="#e8e8e8" stroke-width="1.500" fill="none"/></svg>
  <svg style="left:220px;top:320px" width="9" height="6"><path d="M1 1l3.500 3.500L8 1" stroke="#f0f0f0" stroke-width="1.700" fill="none"/></svg>
  <div class="t" style="left:175px;top:316px;font-size:11.500px;color:#f2f2f2">100%</div>
  <svg style="left:135px;top:313px" width="16" height="19"><path d="M2 1h11v4h-1.300l-.500-2H9v9h1.500v1.500h-6V12H6V3H3.300l-.5 2H2z" fill="#c8c8c8"/><path d="M1 16.500h12M10.500 14l2.500 2.500-2.500 2.500" stroke="#c8c8c8" stroke-width="1.200" fill="none"/></svg>
  <div class="fld" style="left:153px;top:337px;width:80px;height:20px;border-color:#5a5a5a"></div><div class="abs" style="left:171px;top:338px;width:1px;height:18px;background:#5a5a5a"></div><div class="abs" style="left:214px;top:338px;width:1px;height:18px;background:#5a5a5a"></div>
  <svg style="left:158px;top:340px" width="9" height="14"><path d="M1 5l3.500-3.500L8 5M1 9l3.500 3.500L8 9" stroke="#e8e8e8" stroke-width="1.500" fill="none"/></svg>
  <svg style="left:220px;top:345px" width="9" height="6"><path d="M1 1l3.500 3.500L8 1" stroke="#f0f0f0" stroke-width="1.700" fill="none"/></svg>
  <div class="t" style="left:175px;top:341px;font-size:11.500px;color:#f2f2f2">0</div>
  <svg style="left:133px;top:338px" width="18" height="19"><rect x="0" y="0" width="17" height="12" fill="#c8c8c8"/><path d="M1.500 2l3 8 3-8M9 10l3-8 3 8M10.200 7.500h3.600" stroke="#535353" stroke-width="1.300" fill="none"/><path d="M1 16h13M11.500 13.500L14 16l-2.500 2.500" stroke="#c8c8c8" stroke-width="1.200" fill="none"/></svg>
  <!-- auto row -->
  <div class="fld" style="left:153px;top:396px;width:80px;height:20px;border-color:#5a5a5a"></div>
  <div class="t" style="left:160px;top:400px;font-size:12px;color:#f2f2f2">自动</div>
  <svg style="left:220px;top:404px" width="9" height="6"><path d="M1 1l3.500 3.500L8 1" stroke="#f0f0f0" stroke-width="1.700" fill="none"/></svg>
  <div class="t" style="left:136px;top:399px;font-size:10px;color:#c8c8c8;font-family:'Liberation Sans','Noto Sans CJK JP',sans-serif">あ</div>
  <svg style="left:134px;top:397px" width="18" height="18"><path d="M1 1v10M3 1v10M13 2v2M13 6v2M5 15.500h11M7.500 13L5 15.500 7.500 18" stroke="#c8c8c8" stroke-width="1" fill="none" stroke-dasharray="1.500 1"/></svg>
  <!-- rotation row -->
  <div class="fld" style="left:153px;top:429px;width:80px;height:20px;border-color:#5a5a5a"></div><div class="abs" style="left:171px;top:430px;width:1px;height:18px;background:#5a5a5a"></div><div class="abs" style="left:214px;top:430px;width:1px;height:18px;background:#5a5a5a"></div>
  <svg style="left:158px;top:432px" width="9" height="14"><path d="M1 5l3.500-3.500L8 5M1 9l3.500 3.500L8 9" stroke="#e8e8e8" stroke-width="1.500" fill="none"/></svg>
  <svg style="left:220px;top:437px" width="9" height="6"><path d="M1 1l3.500 3.500L8 1" stroke="#f0f0f0" stroke-width="1.700" fill="none"/></svg>
  <div class="t" style="left:175px;top:433px;font-size:11.500px;color:#f2f2f2">0°</div>
  <svg style="left:134px;top:430px" width="17" height="18"><path d="M13.500 4.500A7 7 0 1015 10" fill="none" stroke="#c8c8c8" stroke-width="1.200"/><path d="M11 1.500l3 3-3.500 1.500" fill="none" stroke="#c8c8c8" stroke-width="1.200"/><path d="M4.500 5.500h7v2.500h-.8l-.4-1.200H9V12h1v1.200H6V12h1V6.800H5.700L5.300 8h-.8z" fill="#c8c8c8"/></svg>
  <!-- T underline / strike -->
  <div class="t" style="left:187px;top:461px;font-size:15px;color:#d8d8d8;font-family:'Liberation Serif',serif;text-decoration:underline">T</div>
  <div class="t" style="left:216px;top:461px;font-size:15px;color:#d8d8d8;font-family:'Liberation Serif',serif;text-decoration:line-through">T</div>
  <div class="t" style="left:134px;top:468px;font-size:9px;color:#c8c8c8">T<sub style="font-size:7px">1</sub></div>
  <div class="abs" style="left:6px;top:482px;width:228px;height:1px;background:#484848"></div>
  <!-- language row -->
  <div class="fld" style="left:7px;top:490px;width:101px;height:19px;border-color:#5a5a5a"></div>
  <div class="t" style="left:13px;top:493px;font-size:12px;color:#f2f2f2">英语 :&nbsp; 美国</div>
  <svg style="left:94px;top:497px" width="9" height="6"><path d="M1 1l3.500 3.500L8 1" stroke="#f0f0f0" stroke-width="1.700" fill="none"/></svg>
  <div class="t" style="left:132px;top:491px;font-size:10px;color:#c8c8c8"><span style="position:relative;top:-3px">a</span><span style="font-size:13px">a</span></div>
  <div class="fld" style="left:153px;top:490px;width:80px;height:19px;border-color:#5a5a5a"></div>
  <svg style="left:220px;top:497px" width="9" height="6"><path d="M1 1l3.500 3.500L8 1" stroke="#f0f0f0" stroke-width="1.700" fill="none"/></svg>
  <!-- pathfinder -->
  <div class="ptabs" style="top:516px;height:19px;border-top:1px solid #383838;border-bottom:1px solid #3a3a3a"></div>
  <div class="abs" style="left:0;top:517px;width:40px;height:17px;background:#484848;border-right:1px solid #3a3a3a"></div>
  <div class="abs" style="left:41px;top:517px;width:76px;height:18px;background:#535353;border-right:1px solid #3a3a3a"></div>
  <div class="t" style="left:8px;top:521px;font-size:12.500px;color:#a2a2a2">对齐</div>
  <div class="t" style="left:48px;top:521px;font-size:12.500px;color:#f4f4f4">路径查找器</div>
  <svg style="left:222px;top:522px" width="11" height="8"><path d="M0 .500h11M0 2.800h11M0 5.100h11M0 7.400h11" stroke="#c8c8c8" stroke-width="1"/></svg>
  <div class="t" style="left:6px;top:543px;font-size:12px;color:#c0c0c0">形状模式 :</div>
  <svg style="left:11px;top:565px" width="125" height="16" viewBox="0 0 125 16"><g stroke="#cfcfcf" stroke-width="1.200">
    <path d="M.600 .600h9v5h5v9h-9v-5h-5z" fill="#cfcfcf"/>
    <rect x="36.600" y=".600" width="9" height="9" fill="#cfcfcf"/><rect x="41.600" y="5.600" width="9" height="9" fill="#535353"/>
    <rect x="72.600" y=".600" width="9" height="9" fill="none"/><rect x="77.600" y="5.600" width="9" height="9" fill="none"/><rect x="77.600" y="5.600" width="4" height="4" fill="#cfcfcf"/>
    <rect x="109.600" y=".600" width="9" height="9" fill="#cfcfcf"/><rect x="114.600" y="5.600" width="9" height="9" fill="#cfcfcf"/><rect x="114.600" y="5.600" width="4" height="4" fill="#535353"/>
  </g></svg>
  <div class="abs" style="left:152px;top:562px;width:75px;height:21px;background:#5a5a5a;border-radius:2px"></div>
  <div class="t" style="left:178px;top:566px;font-size:12px;color:#777">扩展</div>
  <div class="t" style="left:6px;top:592px;font-size:12px;color:#c0c0c0">路径查找器 :</div>
  <svg style="left:14px;top:615px" width="205" height="16" viewBox="0 0 205 16"><g stroke="#cfcfcf" stroke-width="1.200">
    <rect x=".600" y=".600" width="9" height="9" fill="none"/><rect x="5.600" y="5.600" width="9" height="9" fill="none"/><rect x="5.600" y="5.600" width="4" height="4" fill="#cfcfcf"/>
    <rect x="37.600" y=".600" width="9" height="9" fill="none"/><rect x="42.600" y="5.600" width="9" height="9" fill="#cfcfcf"/>
    <rect x="74.600" y=".600" width="9" height="9" fill="#cfcfcf"/><rect x="79.600" y="5.600" width="9" height="9" fill="#cfcfcf"/>
    <rect x="112.600" y=".600" width="9" height="9" fill="none" stroke-dasharray="2 1"/><rect x="117.600" y="5.600" width="9" height="9" fill="none"/><rect x="117.600" y="5.600" width="4" height="4" fill="#cfcfcf"/>
    <rect x="149.600" y=".600" width="9" height="9" fill="none"/><rect x="154.600" y="5.600" width="9" height="9" fill="none"/>
    <rect x="187.600" y=".600" width="9" height="9" fill="none"/><rect x="192.600" y="5.600" width="9" height="9" fill="#cfcfcf"/><rect x="192.600" y="5.600" width="4" height="4" fill="#535353" stroke="none"/>
  </g></svg>
  <div class="abs" style="left:0;top:641px;width:238px;height:1px;background:#3d3d3d"></div>
  <div class="abs" style="left:107px;top:643px;width:24px;height:4px;background:repeating-linear-gradient(90deg,#3a3a3a 0 1px,transparent 1px 2px)"></div>
</div>

<!-- ===== appearance panel (b) ===== -->
<div class="panel" style="left:1348px;top:205px;width:242px;height:375px;border-radius:4px 4px 0 0;box-shadow:0 1px 2px rgba(0,0,0,.35)">
  <div class="phead" style="height:13px;border-radius:4px 4px 0 0"></div>
  <svg style="left:211px;top:4px" width="8" height="6"><path d="M3.500 0L.500 3l3 3zM7.500 0L4.500 3l3 3z" fill="#d0d0d0"/></svg>
  <svg style="left:229px;top:3px" width="8" height="8"><path d="M1 1l6 6M7 1l-6 6" stroke="#d8d8d8" stroke-width="1.800"/></svg>
  <div class="ptabs" style="top:13px;height:19px;border-top:1px solid #383838;border-bottom:1px solid #3a3a3a"></div>
  <div class="abs" style="left:0;top:14px;width:39px;height:18px;background:#535353;border-right:1px solid #3a3a3a"></div>
  <div class="t" style="left:8px;top:16px;font-size:12.500px;color:#f4f4f4">外观</div>
  <svg style="left:224px;top:19px" width="11" height="8"><path d="M0 .500h11M0 2.800h11M0 5.100h11M0 7.400h11" stroke="#c8c8c8" stroke-width="1"/></svg>
  <!-- list box -->
  <div class="abs" style="left:7px;top:38px;width:229px;height:310px;border:1px solid #5c5c5c"></div>
  <div class="abs" style="left:8px;top:62px;width:227px;height:1px;background:#5c5c5c"></div>
  <div class="abs" style="left:8px;top:87px;width:227px;height:1px;background:#5c5c5c"></div>
  <div class="abs" style="left:8px;top:112px;width:227px;height:1px;background:#5c5c5c"></div>
  <div class="abs" style="left:8px;top:137px;width:227px;height:1px;background:#5c5c5c"></div>
  <div class="abs" style="left:8px;top:162px;width:227px;height:1px;background:#5c5c5c"></div>
  <div class="abs" style="left:8px;top:187px;width:227px;height:1px;background:#5c5c5c"></div>
  <div class="abs" style="left:31px;top:63px;width:1px;height:124px;background:#474747"></div>
  <div class="abs" style="left:9px;top:41px;width:19px;height:19px;background:#fff;border:1px solid #3c3c3c"></div>
  <div class="t" style="left:57px;top:46px;font-size:12px;font-weight:bold;color:#e8e8e8">未选择对象</div>
  <!-- eyes -->
  <svg style="left:10px;top:70px" width="16" height="11"><path d="M.500 5.500C3 1.500 5.500 .500 8 .500s5 1 7.500 5c-2.500 4-5 5-7.500 5s-5-1-7.500-5z" fill="#d8d8d8"/><circle cx="8" cy="5.500" r="3" fill="#535353"/><circle cx="8" cy="5.500" r="1.500" fill="#d8d8d8"/></svg>
  <svg style="left:10px;top:95px" width="16" height="11"><path d="M.500 5.500C3 1.500 5.500 .500 8 .500s5 1 7.500 5c-2.500 4-5 5-7.500 5s-5-1-7.500-5z" fill="#696969"/><circle cx="8" cy="5.500" r="3" fill="#535353"/><circle cx="8" cy="5.500" r="1.500" fill="#696969"/></svg>
  <svg style="left:10px;top:120px" width="16" height="11"><path d="M.500 5.500C3 1.500 5.500 .500 8 .500s5 1 7.500 5c-2.500 4-5 5-7.500 5s-5-1-7.500-5z" fill="#d8d8d8"/><circle cx="8" cy="5.500" r="3" fill="#535353"/><circle cx="8" cy="5.500" r="1.500" fill="#d8d8d8"/></svg>
  <svg style="left:10px;top:145px" width="16" height="11"><path d="M.500 5.500C3 1.500 5.500 .500 8 .500s5 1 7.500 5c-2.500 4-5 5-7.500 5s-5-1-7.500-5z" fill="#696969"/><circle cx="8" cy="5.500" r="3" fill="#535353"/><circle cx="8" cy="5.500" r="1.500" fill="#696969"/></svg>
  <svg style="left:10px;top:170px" width="16" height="11"><path d="M.500 5.500C3 1.500 5.500 .500 8 .500s5 1 7.500 5c-2.500 4-5 5-7.500 5s-5-1-7.500-5z" fill="#696969"/><circle cx="8" cy="5.500" r="3" fill="#535353"/><circle cx="8" cy="5.500" r="1.500" fill="#696969"/></svg>
  <svg style="left:37px;top:72px" width="9" height="6"><path d="M1 1l3.500 3.500L8 1" stroke="#f0f0f0" stroke-width="1.600" fill="none"/></svg>
  <svg style="left:37px;top:122px" width="9" height="6"><path d="M1 1l3.500 3.500L8 1" stroke="#f0f0f0" stroke-width="1.600" fill="none"/></svg>
  <div class="t" style="left:57px;top:70px;font-size:12px;color:#ededed"><span class="ul">描边 :</span></div>
  <svg style="left:99px;top:67px" width="18" height="18"><rect x="1" y="1" width="16" height="16" fill="#fff" stroke="#2a2a2a" stroke-width="1"/><rect x="2.500" y="2.500" width="13" height="13" fill="none" stroke="#d8d8d8" stroke-width="1"/><path d="M4.500 13.500l9-9" stroke="#c0102a" stroke-width="2.200"/></svg>
  <div class="t" style="left:80px;top:95px;font-size:12px;color:#ededed"><span class="ul">不透明度 :</span> 默认值</div>
  <div class="t" style="left:57px;top:120px;font-size:12px;color:#ededed">填色 :</div>
  <svg style="left:99px;top:117px" width="18" height="18"><rect x="1" y="1" width="16" height="16" fill="#fff" stroke="#2a2a2a" stroke-width="1"/><rect x="2.500" y="2.500" width="13" height="13" fill="none" stroke="#444" stroke-width="1"/></svg>
  <div class="t" style="left:80px;top:145px;font-size:12px;color:#ededed"><span class="ul">不透明度 :</span> 默认值</div>
  <div class="t" style="left:57px;top:170px;font-size:12px;color:#ededed"><span class="ul">不透明度 :</span> 默认值</div>
  <!-- footer -->
  <svg style="left:12px;top:352px" width="202" height="14" viewBox="0 0 202 14"><rect x="1" y="1.500" width="10" height="10" fill="none" stroke="#e0e0e0" stroke-width="1.600"/><rect x="27" y="1.500" width="10" height="10" fill="none" stroke="#cfcfcf" stroke-width="1.200"/><rect x="29.500" y="4" width="5" height="5" fill="#cfcfcf"/><circle cx="143" cy="7" r="5" fill="none" stroke="#cfcfcf" stroke-width="1.600"/><path d="M139.500 3.500l7 7" stroke="#cfcfcf" stroke-width="1.600"/><path d="M164 2h9v9h-5l-4-4z" fill="#6a6a6a"/><path d="M190 3.500h10M193 3V1.500h4V3M191.500 4l.7 8.500h5.600l.7-8.500M194 6v5M196.500 6v5" fill="none" stroke="#666" stroke-width="1.100"/></svg>
  <div class="t" style="left:63px;top:351px;font-size:14px;font-style:italic;color:#d8d8d8;font-family:'Liberation Serif',serif">fx<span style="font-size:8px">▾</span></div>
  <div class="abs" style="left:0;top:367px;width:240px;height:1px;background:#3d3d3d"></div>
  <div class="abs" style="left:108px;top:369px;width:24px;height:4px;background:repeating-linear-gradient(90deg,#3a3a3a 0 1px,transparent 1px 2px)"></div>
</div>

<!-- ===== watermark ===== -->
<div class="t" id="wm" style="left:1438px;top:948px;font-size:48px;color:#fff;text-shadow:3px 3px 0 #000,2px 2px 0 #000,1px 1px 0 #000;font-family:'Liberation Sans','Noto Sans CJK SC',sans-serif;letter-spacing:0.600px;font-weight:500">头条 @花花平面设计</div>

</body>
</html>
